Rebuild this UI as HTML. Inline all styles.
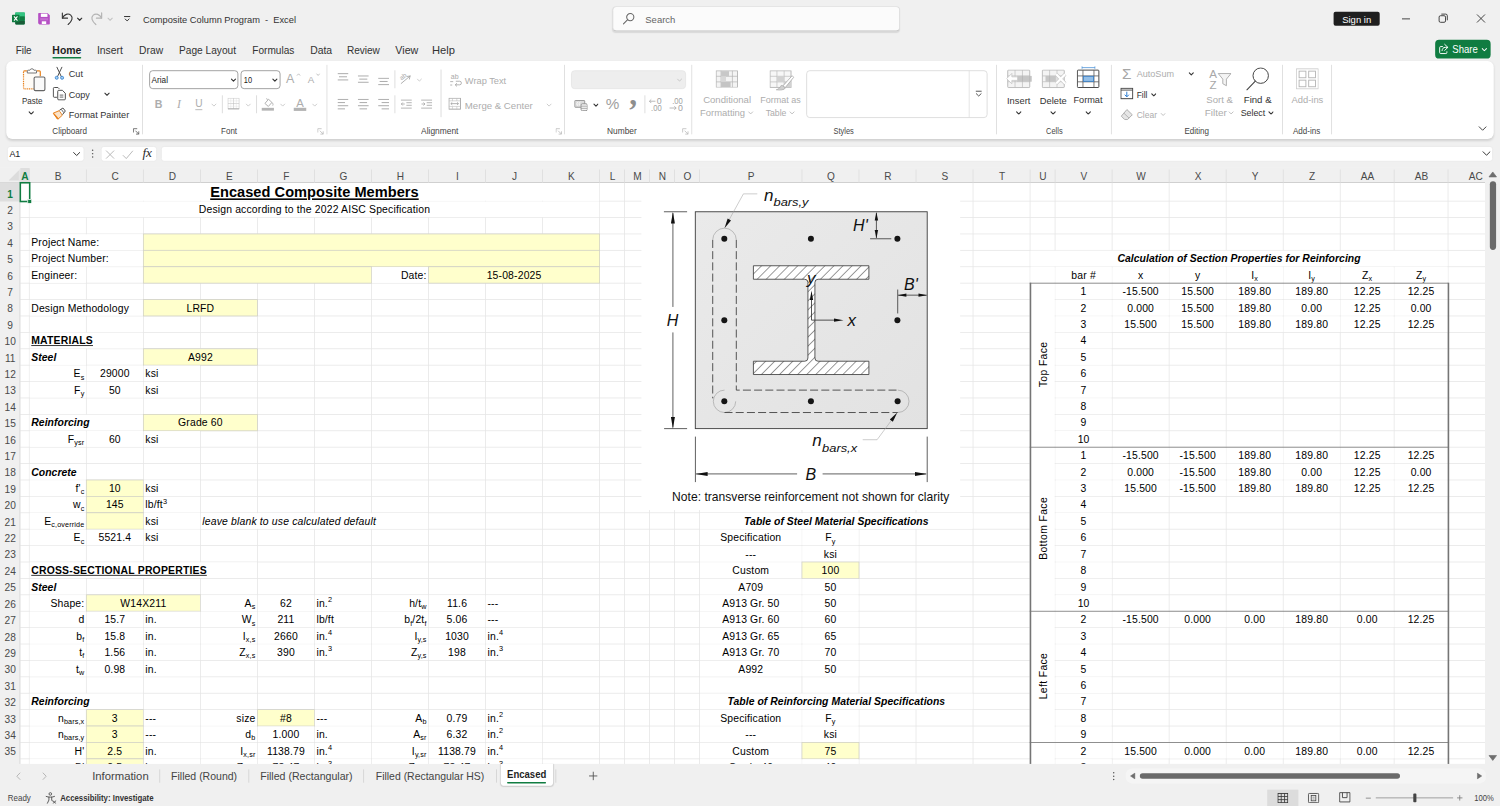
<!DOCTYPE html>
<html lang="en"><head><meta charset="utf-8"><title>Composite Column Program - Excel</title>
<style>
html,body{margin:0;padding:0;background:#f0f0f0;}
body{width:1500px;height:806px;overflow:hidden;position:relative;font-family:"Liberation Sans",sans-serif;}
#app{position:absolute;left:0;top:0;width:1920px;height:1032px;transform:scale(0.78125,0.7811);transform-origin:0 0;background:#f0f0f0;overflow:hidden;color:#242424;font-size:12px;}
#app div,#app span,#app svg{position:absolute;box-sizing:border-box;}
#app span.i{position:static;}
.t{white-space:nowrap;line-height:1;}
.g{color:#a3a3a3;}
.c{text-align:center;}
.r{text-align:right;}
/* sheet */
#sheet{left:0;top:215px;width:1901px;height:763px;overflow:hidden;background:#fff;}
.vl{top:0;width:1px;height:800px;background:#e6e6e6;}
.hl{left:0;height:1px;width:1901px;background:#e6e6e6;}
.ce{white-space:nowrap;font-size:13.33px;line-height:22px;color:#000;background:#fff;overflow:visible;padding:0 2px 0 2px;letter-spacing:0.2px;}
.ce.n{background:transparent;}
.y{background:#ffffcc;box-shadow:0 0 0 1px #d2d2c6;}
.b{font-weight:bold;letter-spacing:0.25px;}
.b.it{letter-spacing:0.05px;}
.it{font-style:italic;}
.u{text-decoration:underline;}
.ce sub{font-size:9.2px;vertical-align:baseline;position:relative;top:3px;line-height:0;}
.ce sup{font-size:9.4px;vertical-align:baseline;position:relative;top:-5.6px;line-height:0;}
.ch{top:2px;height:18px;line-height:18px;font-size:12.9px;color:#4a4a4a;text-align:center;}
.rh{left:0;width:26px;font-size:13px;color:#4a4a4a;text-align:center;line-height:21px;height:21px;}
</style></head><body><div id="app">
<svg style="left:15.36px;top:15.36px;" width="17.28" height="17.28" viewBox="0 0 16 16"><rect x="4.2" y="0.8" width="11.3" height="14.4" rx="1.2" fill="#21a366"/>
<rect x="4.2" y="0.8" width="11.3" height="4.8" fill="#33c481"/><rect x="4.2" y="10.4" width="11.3" height="4.8" rx="1.2" fill="#185c37"/>
<rect x="9.8" y="5.6" width="5.7" height="4.8" fill="#107c41"/>
<rect x="0.3" y="3.6" width="8.9" height="8.9" rx="1" fill="#107c41"/>
<path d="M2.7 5.6 L6.8 10.5 M6.8 5.6 L2.7 10.5" stroke="#fff" stroke-width="1.3"/></svg>
<svg style="left:47.62px;top:16.13px;" width="16.64" height="16.13" viewBox="0 0 16 16"><path d="M0.6 1.6 a1 1 0 0 1 1-1 H12.4 L15.4 3.6 V14.4 a1 1 0 0 1-1 1 H2.2 L0.6 13.8 Z" fill="#b54fc4"/>
<rect x="4" y="1.4" width="8.4" height="4.2" fill="#fff"/>
<rect x="3.2" y="7.2" width="10" height="2.8" fill="#c56ed1"/>
<rect x="5.2" y="11.2" width="5.6" height="3.4" fill="#fff"/></svg>
<svg style="left:76.8px;top:14.08px;" width="17.92" height="19.2" viewBox="0 0 14 15"><path d="M2.2 2 V7.2 H7.4" fill="none" stroke="#333" stroke-width="1.1" stroke-linecap="round" stroke-linejoin="round"/>
<path d="M2.4 7 C4 3.4 8 2 10.6 4.2 C13.2 6.6 12 10 8 13.6" fill="none" stroke="#333" stroke-width="1.1" stroke-linecap="round"/></svg>
<svg style="left:98.43px;top:21.7px;" width="7.94" height="5.25" viewBox="-3.1 -2.05 6.2 4.1"><path d="M-2.1 -1.05 L0 1.05 L2.1 -1.05" fill="none" stroke="#333" stroke-width="1.2" stroke-linecap="round" stroke-linejoin="round"/></svg>
<svg style="left:115.2px;top:14.08px;" width="17.92" height="19.2" viewBox="0 0 14 15"><g transform="translate(14,0) scale(-1,1)"><path d="M2.2 2 V7.2 H7.4" fill="none" stroke="#b4b4b4" stroke-width="1.2" stroke-linecap="round" stroke-linejoin="round"/>
<path d="M2.4 7 C4 3.4 8 2 10.6 4.2 C13.2 6.6 12 10 8 13.6" fill="none" stroke="#b4b4b4" stroke-width="1.2" stroke-linecap="round"/></g></svg>
<svg style="left:136.83px;top:21.7px;" width="7.94" height="5.25" viewBox="-3.1 -2.05 6.2 4.1"><path d="M-2.1 -1.05 L0 1.05 L2.1 -1.05" fill="none" stroke="#c4c4c4" stroke-width="1.1" stroke-linecap="round" stroke-linejoin="round"/></svg>
<svg style="left:156.93px;top:19.2px;" width="11.52" height="11.52" viewBox="0 0 9 9"><path d="M1.8 1.7 H7.2" stroke="#333" stroke-width="1" stroke-linecap="round"/><path d="M2.6 4.2 L4.5 6.1 L6.4 4.2" fill="none" stroke="#333" stroke-width="1" stroke-linecap="round" stroke-linejoin="round"/></svg>
<div class="t " style="transform:scaleX(0.9887);transform-origin:0 0;left:183.04px;top:19.17px;font-size:12px;color:#333;white-space:pre;">Composite Column Program  -  Excel</div>
<div style="left:784.26px;top:8.45px;width:367.49px;height:31.49px;background:#fbfbfb;border:1px solid #dcdcdc;border-bottom-color:#c4c4c4;border-radius:5px;box-shadow:0 1px 1.5px rgba(0,0,0,0.10);"></div>
<svg style="left:796.16px;top:15.36px;" width="17.92" height="17.92" viewBox="0 0 14 14"><circle cx="8.4" cy="5.4" r="3.6" fill="none" stroke="#666" stroke-width="1.05"/><path d="M5.8 8 L1.6 12.2" stroke="#666" stroke-width="1.05" stroke-linecap="round"/></svg>
<div class="t " style="transform:scaleX(0.9934);transform-origin:0 0;left:825.6px;top:18.68px;font-size:12.2px;color:#666;">Search</div>
<div style="left:1707.01px;top:14.72px;width:59.01px;height:18.56px;background:#1f1f1f;border-radius:2.5px;"></div>
<div class="t " style="transform:scaleX(1.0116);transform-origin:0 0;left:1717.89px;top:18.66px;font-size:12px;color:#fff;">Sign in</div>
<svg style="left:1792px;top:16.64px;" width="15.36" height="15.36" viewBox="0 0 12 12"><path d="M2 5.6 H10" stroke="#333" stroke-width="0.9"/></svg>
<svg style="left:1839.36px;top:15.36px;" width="16.64" height="16.64" viewBox="0 0 13 13"><rect x="2.4" y="4" width="6.4" height="6.6" rx="1.4" fill="none" stroke="#333" stroke-width="0.9"/><path d="M4.6 2.4 H9 a1.6 1.6 0 0 1 1.6 1.6 V8.6" fill="none" stroke="#333" stroke-width="0.9"/></svg>
<svg style="left:1888px;top:16px;" width="15.36" height="15.36" viewBox="0 0 12 12"><path d="M2 2 L10 10 M10 2 L2 10" stroke="#333" stroke-width="0.9"/></svg>
<div class="t " style="transform:scaleX(0.9776);transform-origin:0 0;left:20.48px;top:58.05px;font-size:13px;color:#333;">File</div>
<div class="t " style="transform:scaleX(1.0277);transform-origin:0 0;left:66.56px;top:58.05px;font-size:13px;color:#1f1f1f;font-weight:bold;">Home</div>
<div style="left:66.56px;top:72.96px;width:37.89px;height:2.18px;background:#107c41;border-radius:1px;"></div>
<div class="t " style="transform:scaleX(1.0236);transform-origin:0 0;left:124.16px;top:58.05px;font-size:13px;color:#333;">Insert</div>
<div class="t " style="transform:scaleX(1.0126);transform-origin:0 0;left:177.92px;top:58.05px;font-size:13px;color:#333;">Draw</div>
<div class="t " style="left:229.12px;top:58.05px;font-size:13px;color:#333;">Page Layout</div>
<div class="t " style="transform:scaleX(0.9923);transform-origin:0 0;left:322.56px;top:58.05px;font-size:13px;color:#333;">Formulas</div>
<div class="t " style="transform:scaleX(1.0255);transform-origin:0 0;left:396.8px;top:58.05px;font-size:13px;color:#333;">Data</div>
<div class="t " style="transform:scaleX(0.9909);transform-origin:0 0;left:444.16px;top:58.05px;font-size:13px;color:#333;">Review</div>
<div class="t " style="transform:scaleX(1.0535);transform-origin:0 0;left:505.6px;top:58.05px;font-size:13px;color:#333;">View</div>
<div class="t " style="transform:scaleX(1.1011);transform-origin:0 0;left:552.96px;top:58.05px;font-size:13px;color:#333;">Help</div>
<div style="left:1836.8px;top:50.82px;width:71.3px;height:24.32px;background:#107c41;border-radius:5px;"></div>
<svg style="left:1841.15px;top:55.04px;" width="14.08" height="15.36" viewBox="0 0 11 12"><path d="M4.6 3.6 H2.4 a1 1 0 0 0-1 1 V9.6 a1 1 0 0 0 1 1 H7.6 a1 1 0 0 0 1-1 V8.4" fill="none" stroke="#fff" stroke-width="0.95"/><path d="M6.4 1.4 L9.6 4.4 L6.4 7.4 M9.4 4.4 H7 C5 4.4 4 5.6 3.8 7.6" fill="none" stroke="#fff" stroke-width="0.95" stroke-linejoin="round" stroke-linecap="round"/></svg>
<div class="t " style="transform:scaleX(0.9409);transform-origin:0 0;left:1858.56px;top:56.77px;font-size:13px;color:#fff;">Share</div>
<svg style="left:1896.19px;top:61.12px;" width="7.94" height="5.25" viewBox="-3.1 -2.05 6.2 4.1"><path d="M-2.1 -1.05 L0 1.05 L2.1 -1.05" fill="none" stroke="#fff" stroke-width="1.0" stroke-linecap="round" stroke-linejoin="round"/></svg>
<div style="left:7.68px;top:78.08px;width:1904.38px;height:99.97px;background:#fff;border-radius:8px;box-shadow:0 1.5px 3px rgba(0,0,0,0.13);"></div>
<div style="left:182.03px;top:83.2px;width:1px;height:88.32px;background:#d8d8d8;"></div>
<div style="left:417.93px;top:83.2px;width:1px;height:88.32px;background:#d8d8d8;"></div>
<div style="left:722.06px;top:83.2px;width:1px;height:88.32px;background:#d8d8d8;"></div>
<div style="left:884.88px;top:83.2px;width:1px;height:88.32px;background:#d8d8d8;"></div>
<div style="left:1274.51px;top:83.2px;width:1px;height:88.32px;background:#d8d8d8;"></div>
<div style="left:1421.71px;top:83.2px;width:1px;height:88.32px;background:#d8d8d8;"></div>
<div style="left:1640.59px;top:83.2px;width:1px;height:88.32px;background:#d8d8d8;"></div>
<div style="left:1703.82px;top:83.2px;width:1px;height:88.32px;background:#d8d8d8;"></div>
<div class="t " style="transform:scaleX(0.8622);transform-origin:0 0;left:67.07px;top:161.76px;font-size:12px;color:#444;">Clipboard</div>
<svg style="left:170.37px;top:163.84px;" width="8.96" height="8.96" viewBox="0 0 7 7"><path d="M0.6 4.4 V0.6 H4.4" fill="none" stroke="#555" stroke-width="0.8"/><path d="M2.6 2.6 L6 6 M6 3.2 V6 H3.2" fill="none" stroke="#555" stroke-width="0.8"/></svg>
<div class="t " style="transform:scaleX(0.8529);transform-origin:0 0;left:282.75px;top:161.76px;font-size:12px;color:#444;">Font</div>
<svg style="left:405.89px;top:163.84px;" width="8.96" height="8.96" viewBox="0 0 7 7"><path d="M0.6 4.4 V0.6 H4.4" fill="none" stroke="#bbb" stroke-width="0.8"/><path d="M2.6 2.6 L6 6 M6 3.2 V6 H3.2" fill="none" stroke="#bbb" stroke-width="0.8"/></svg>
<div class="t " style="transform:scaleX(0.8947);transform-origin:0 0;left:539.26px;top:161.76px;font-size:12px;color:#444;">Alignment</div>
<svg style="left:710.66px;top:163.84px;" width="8.96" height="8.96" viewBox="0 0 7 7"><path d="M0.6 4.4 V0.6 H4.4" fill="none" stroke="#bbb" stroke-width="0.8"/><path d="M2.6 2.6 L6 6 M6 3.2 V6 H3.2" fill="none" stroke="#bbb" stroke-width="0.8"/></svg>
<div class="t " style="transform:scaleX(0.8907);transform-origin:0 0;left:776.96px;top:161.76px;font-size:12px;color:#444;">Number</div>
<svg style="left:872.7px;top:163.84px;" width="8.96" height="8.96" viewBox="0 0 7 7"><path d="M0.6 4.4 V0.6 H4.4" fill="none" stroke="#bbb" stroke-width="0.8"/><path d="M2.6 2.6 L6 6 M6 3.2 V6 H3.2" fill="none" stroke="#bbb" stroke-width="0.8"/></svg>
<div class="t " style="transform:scaleX(0.7912);transform-origin:0 0;left:1067.14px;top:161.76px;font-size:12px;color:#444;">Styles</div>
<div class="t " style="transform:scaleX(0.7918);transform-origin:0 0;left:1338.5px;top:161.76px;font-size:12px;color:#444;">Cells</div>
<div class="t " style="transform:scaleX(0.8582);transform-origin:0 0;left:1516.29px;top:161.76px;font-size:12px;color:#444;">Editing</div>
<div class="t " style="transform:scaleX(0.8588);transform-origin:0 0;left:1655.42px;top:161.76px;font-size:12px;color:#444;">Add-ins</div>
<svg style="left:1891.58px;top:160.7px;" width="11.52" height="7.04" viewBox="-4.5 -2.75 9 5.5"><path d="M-3.5 -1.75 L0 1.75 L3.5 -1.75" fill="none" stroke="#444" stroke-width="1.0" stroke-linecap="round" stroke-linejoin="round"/></svg>
<svg style="left:25.6px;top:84.48px;" width="34.56" height="34.56" viewBox="0 0 27 27"><path d="M3.8 6 V22.6 H13 V11 H19.4 V6 Z" fill="#fffcf7"/>
<path d="M6.6 5.2 H4.2 a1 1 0 0 0-1 1" fill="none" stroke="#e8821e" stroke-width="1.2"/>
<path d="M3.2 6.4 V22.2 a1 1 0 0 0 1 1 H13.4" fill="none" stroke="#e8821e" stroke-width="1.2" stroke-dasharray="1.1 0.7"/>
<path d="M16.6 5.2 H19 a1 1 0 0 1 1 1 V10.6" fill="none" stroke="#e8821e" stroke-width="1.2"/>
<path d="M7 7.4 V5.4 a0.8 0.8 0 0 1 .8-.8 H9.6 a2.1 2.1 0 0 1 4 0 H15.4 a0.8 0.8 0 0 1 .8.8 V7.4 Z" fill="#fff" stroke="#777" stroke-width="1"/>
<rect x="13.8" y="11.4" width="10.8" height="13.6" rx="1.3" fill="#fafafa" stroke="#666" stroke-width="1.1"/></svg>
<div class="t " style="transform:scaleX(0.8593);transform-origin:0 0;left:27.65px;top:123.23px;font-size:12px;color:#333;">Paste</div>
<svg style="left:36.35px;top:141.5px;" width="7.94" height="5.25" viewBox="-3.1 -2.05 6.2 4.1"><path d="M-2.1 -1.05 L0 1.05 L2.1 -1.05" fill="none" stroke="#333" stroke-width="1.1" stroke-linecap="round" stroke-linejoin="round"/></svg>
<svg style="left:69.12px;top:85.12px;" width="14.08" height="17.92" viewBox="0 0 11 14"><path d="M3 0.8 L7.4 10.2 M8 0.8 L3.6 10.2" stroke="#444" stroke-width="0.95" stroke-linecap="round"/>
<circle cx="2.8" cy="11.4" r="1.5" fill="#a9d1f5" stroke="#3a86d0" stroke-width="0.9"/><circle cx="8.2" cy="11.4" r="1.5" fill="#a9d1f5" stroke="#3a86d0" stroke-width="0.9"/></svg>
<div class="t " style="transform:scaleX(0.9733);transform-origin:0 0;left:88.06px;top:89.06px;font-size:12px;color:#333;">Cut</div>
<svg style="left:67.2px;top:110.72px;" width="17.92" height="17.92" viewBox="0 0 14 14"><path d="M4.6 10.6 H2 a1 1 0 0 1-1-1 V1.8 a1 1 0 0 1 1-1 H5.6 L7 2.2" fill="none" stroke="#444" stroke-width="0.95"/>
<path d="M5.4 4.6 a1 1 0 0 1 1-1 H10 L13 6.6 V12.2 a1 1 0 0 1-1 1 H6.4 a1 1 0 0 1-1-1 Z" fill="#fff" stroke="#444" stroke-width="0.95"/>
<path d="M7.4 8.4 H11 M7.4 10.4 H11" stroke="#444" stroke-width="0.8"/></svg>
<div class="t " style="transform:scaleX(0.9641);transform-origin:0 0;left:88.06px;top:114.91px;font-size:12px;color:#333;">Copy</div>
<svg style="left:132.86px;top:117.7px;" width="7.94" height="5.25" viewBox="-3.1 -2.05 6.2 4.1"><path d="M-2.1 -1.05 L0 1.05 L2.1 -1.05" fill="none" stroke="#333" stroke-width="1.1" stroke-linecap="round" stroke-linejoin="round"/></svg>
<svg style="left:67.2px;top:136.96px;" width="17.92" height="16.64" viewBox="0 0 14 13"><path d="M0.8 6.2 L7 3.6 L10 8.2 L5.6 12.2 Z" fill="#fbe3c8" stroke="#e8821e" stroke-width="1"/>
<path d="M2 6.6 L6.4 11.6 L4.8 12.4 L0.8 6.4Z" fill="#e8821e"/>
<path d="M7.2 3.2 L10.6 1 L13 4 L10.2 7.6" fill="#fff" stroke="#444" stroke-width="0.95" stroke-linejoin="round"/><path d="M9 2.4 L11.4 5.6" stroke="#444" stroke-width="0.8"/></svg>
<div class="t " style="transform:scaleX(0.9758);transform-origin:0 0;left:88.06px;top:141.28px;font-size:12px;color:#333;">Format Painter</div>
<div style="left:190.85px;top:90.11px;width:114.3px;height:23.55px;border:1px solid #8a8a8a;border-radius:4.5px;background:#fff;"></div>
<div class="t " style="transform:scaleX(0.8744);transform-origin:0 0;left:194.05px;top:96.23px;font-size:12px;color:#222;">Arial</div>
<svg style="left:295.17px;top:100.35px;" width="7.68" height="5.12" viewBox="-3 -2 6 4"><path d="M-2 -1 L0 1 L2 -1" fill="none" stroke="#333" stroke-width="1.15" stroke-linecap="round" stroke-linejoin="round"/></svg>
<div style="left:307.71px;top:90.11px;width:51.2px;height:23.55px;border:1px solid #8a8a8a;border-radius:4.5px;background:#fff;"></div>
<div class="t " style="transform:scaleX(0.7959);transform-origin:0 0;left:311.55px;top:96.23px;font-size:12px;color:#222;">10</div>
<svg style="left:348.42px;top:100.35px;" width="7.68" height="5.12" viewBox="-3 -2 6 4"><path d="M-2 -1 L0 1 L2 -1" fill="none" stroke="#333" stroke-width="1.15" stroke-linecap="round" stroke-linejoin="round"/></svg>
<div class="t " style="left:366.08px;top:93.02px;font-size:16px;color:#adadad;">A</div>
<svg style="left:378.88px;top:92.8px;" width="6.4" height="5.12" viewBox="0 0 5 4"><path d="M0.8 3 L2.5 1.2 L4.2 3" fill="none" stroke="#a8a8a8" stroke-width="0.7"/></svg>
<div class="t " style="left:393.86px;top:95.7px;font-size:12.5px;color:#adadad;">A</div>
<svg style="left:403.84px;top:93.44px;" width="6.4" height="5.12" viewBox="0 0 5 4"><path d="M0.8 1 L2.5 2.8 L4.2 1" fill="none" stroke="#a8a8a8" stroke-width="0.7"/></svg>
<div class="t " style="left:198.1px;top:126.58px;font-size:13.6px;color:#adadad;font-weight:bold;">B</div>
<div class="t " style="left:226.65px;top:126.07px;font-size:15px;color:#adadad;font-style:italic;font-family:'Liberation Serif',serif;">I</div>
<div class="t " style="left:249.77px;top:126.14px;font-size:13px;color:#adadad;">U</div>
<div style="left:249.6px;top:139.78px;width:9.47px;height:1.02px;background:#a8a8a8;"></div>
<svg style="left:270.21px;top:131.58px;" width="7.68" height="5.12" viewBox="-3 -2 6 4"><path d="M-2 -1 L0 1 L2 -1" fill="none" stroke="#c8c8c8" stroke-width="0.9" stroke-linecap="round" stroke-linejoin="round"/></svg>
<div style="left:284.04px;top:122.11px;width:1px;height:23.3px;background:#d4d4d4;"></div>
<svg style="left:290.56px;top:125.44px;" width="16" height="15.36" viewBox="0 0 12.5 12"><path d="M0.6 0.6 H11.8 V11.2 H0.6 Z M6.2 0.6 V11.2 M0.6 5.9 H11.8" fill="none" stroke="#bdbdbd" stroke-width="0.55"/><path d="M3.4 0.6 V11.2 M9 0.6 V11.2 M0.6 3.2 H11.8 M0.6 8.6 H11.8" stroke="#dcdcdc" stroke-width="0.4"/><path d="M0.6 11.2 H11.8" stroke="#a8a8a8" stroke-width="0.9"/></svg>
<svg style="left:314.37px;top:131.58px;" width="7.68" height="5.12" viewBox="-3 -2 6 4"><path d="M-2 -1 L0 1 L2 -1" fill="none" stroke="#c8c8c8" stroke-width="0.9" stroke-linecap="round" stroke-linejoin="round"/></svg>
<div style="left:327.95px;top:122.11px;width:1px;height:23.3px;background:#d4d4d4;"></div>
<svg style="left:334.08px;top:124.16px;" width="17.92" height="19.2" viewBox="0 0 14 15"><path d="M4 6.6 L7.6 2.4 L11 5.6 L7.4 9.6 Z" fill="none" stroke="#a8a8a8" stroke-width="0.9" stroke-linejoin="round"/><path d="M6.6 3.2 L5.6 1.4 M10.8 5.8 C12.2 6.2 12.4 7.6 11.8 8.8" fill="none" stroke="#a8a8a8" stroke-width="0.8"/><rect x="0.8" y="11" width="12.2" height="2.8" fill="#b4b4b4"/></svg>
<svg style="left:357.89px;top:131.58px;" width="7.68" height="5.12" viewBox="-3 -2 6 4"><path d="M-2 -1 L0 1 L2 -1" fill="none" stroke="#c8c8c8" stroke-width="0.9" stroke-linecap="round" stroke-linejoin="round"/></svg>
<div class="t " style="left:379.16px;top:124.81px;font-size:14.5px;color:#adadad;">A</div>
<div style="left:376.06px;top:138.24px;width:15.62px;height:3.58px;background:#b4b4b4;"></div>
<svg style="left:399.23px;top:131.58px;" width="7.68" height="5.12" viewBox="-3 -2 6 4"><path d="M-2 -1 L0 1 L2 -1" fill="none" stroke="#c8c8c8" stroke-width="0.9" stroke-linecap="round" stroke-linejoin="round"/></svg>
<svg style="left:431.74px;top:93.25px;" width="14.08" height="10.62" viewBox="0 0 11 8.3"><path d="M0 1 H11" stroke="#a8a8a8" stroke-width="0.95"/><path d="M1.5 4.15 H9.5" stroke="#a8a8a8" stroke-width="0.95"/><path d="M0 7.3 H11" stroke="#a8a8a8" stroke-width="0.95"/></svg>
<svg style="left:457.6px;top:96.32px;" width="14.08" height="10.62" viewBox="0 0 11 8.3"><path d="M0 1 H11" stroke="#a8a8a8" stroke-width="0.95"/><path d="M1.5 4.15 H9.5" stroke="#a8a8a8" stroke-width="0.95"/><path d="M0 7.3 H11" stroke="#a8a8a8" stroke-width="0.95"/></svg>
<svg style="left:483.58px;top:99.39px;" width="14.08" height="10.62" viewBox="0 0 11 8.3"><path d="M0 1 H11" stroke="#a8a8a8" stroke-width="0.95"/><path d="M1.5 4.15 H9.5" stroke="#a8a8a8" stroke-width="0.95"/><path d="M0 7.3 H11" stroke="#a8a8a8" stroke-width="0.95"/></svg>
<div style="left:504.72px;top:89.86px;width:1px;height:23.3px;background:#d4d4d4;"></div>
<svg style="left:510.72px;top:92.16px;" width="17.92" height="17.92" viewBox="0 0 14 14"><path d="M2 11.6 L10.6 4.4 M10.8 4.2 L7.8 4.6 M10.8 4.2 L10.2 7.2" fill="none" stroke="#a8a8a8" stroke-width="0.9" stroke-linecap="round"/><text x="1" y="7" font-size="6.5" fill="#a8a8a8" transform="rotate(-38 4 6)" font-family="Liberation Sans,sans-serif">ab</text></svg>
<svg style="left:533.25px;top:100.1px;" width="7.68" height="5.12" viewBox="-3 -2 6 4"><path d="M-2 -1 L0 1 L2 -1" fill="none" stroke="#c8c8c8" stroke-width="0.9" stroke-linecap="round" stroke-linejoin="round"/></svg>
<div style="left:564.11px;top:89.22px;width:1px;height:60.54px;background:#d4d4d4;"></div>
<svg style="left:574.72px;top:92.8px;" width="17.92" height="19.2" viewBox="0 0 14 15"><text x="1.6" y="6.2" font-size="7" fill="#a8a8a8" font-family="Liberation Sans,sans-serif">ab</text><path d="M1 9 H4 M1 12.4 H3 M6 12.2 H10.4 a1.8 1.8 0 0 0 0-3.6 H6.6 M7.8 10.6 L6 12.2 L7.8 13.8" fill="none" stroke="#a8a8a8" stroke-width="0.85"/></svg>
<div class="t " style="transform:scaleX(0.9867);transform-origin:0 0;left:595.07px;top:97.51px;font-size:12px;color:#adadad;">Wrap Text</div>
<svg style="left:431.74px;top:126.3px;" width="14.08" height="14.66" viewBox="0 0 11 11.45"><path d="M0 1 H11" stroke="#a8a8a8" stroke-width="0.95"/><path d="M0 4.15 H7.5" stroke="#a8a8a8" stroke-width="0.95"/><path d="M0 7.3 H11" stroke="#a8a8a8" stroke-width="0.95"/><path d="M0 10.45 H7.5" stroke="#a8a8a8" stroke-width="0.95"/></svg>
<svg style="left:457.6px;top:126.3px;" width="14.08" height="14.66" viewBox="0 0 11 11.45"><path d="M0 1 H11" stroke="#a8a8a8" stroke-width="0.95"/><path d="M1.75 4.15 H9.25" stroke="#a8a8a8" stroke-width="0.95"/><path d="M0 7.3 H11" stroke="#a8a8a8" stroke-width="0.95"/><path d="M1.75 10.45 H9.25" stroke="#a8a8a8" stroke-width="0.95"/></svg>
<svg style="left:483.58px;top:126.3px;" width="14.08" height="14.66" viewBox="0 0 11 11.45"><path d="M0 1 H11" stroke="#a8a8a8" stroke-width="0.95"/><path d="M3.5 4.15 H11" stroke="#a8a8a8" stroke-width="0.95"/><path d="M0 7.3 H11" stroke="#a8a8a8" stroke-width="0.95"/><path d="M3.5 10.45 H11" stroke="#a8a8a8" stroke-width="0.95"/></svg>
<div style="left:504.72px;top:122.24px;width:1px;height:22.78px;background:#d4d4d4;"></div>
<svg style="left:512.64px;top:126.46px;" width="14.72" height="14.59" viewBox="0 0 11.5 10"><path d="M0 1 H11.5 M5.6 3.6 H11.5 M5.6 6.2 H11.5 M0 9 H11.5 M4 4.9 H0.6 M2 3.4 L0.5 4.9 L2 6.4" fill="none" stroke="#a8a8a8" stroke-width="0.85"/></svg>
<svg style="left:538.5px;top:126.46px;" width="14.72" height="14.59" viewBox="0 0 11.5 10"><path d="M0 1 H11.5 M5.6 3.6 H11.5 M5.6 6.2 H11.5 M0 9 H11.5 M0.4 4.9 H3.8 M2.4 3.4 L3.9 4.9 L2.4 6.4" fill="none" stroke="#a8a8a8" stroke-width="0.85"/></svg>
<svg style="left:574.08px;top:125.44px;" width="16" height="15.36" viewBox="0 0 12.5 12"><rect x="0.5" y="0.5" width="11.5" height="11" fill="none" stroke="#a0a0a0" stroke-width="0.9"/><path d="M0.5 3.2 H12 M0.5 8.8 H12 M4 0.5 V3.2 M8.4 0.5 V3.2 M4 8.8 V11.5 M8.4 8.8 V11.5" stroke="#bdbdbd" stroke-width="0.6"/><path d="M2.4 6 H10 M3.8 4.8 L2.4 6 L3.8 7.2 M8.6 4.8 L10 6 L8.6 7.2" fill="none" stroke="#a0a0a0" stroke-width="0.8"/></svg>
<div class="t " style="transform:scaleX(1.0260);transform-origin:0 0;left:595.07px;top:128.61px;font-size:12px;color:#adadad;">Merge &amp; Center</div>
<svg style="left:699.26px;top:131.58px;" width="7.68" height="5.12" viewBox="-3 -2 6 4"><path d="M-2 -1 L0 1 L2 -1" fill="none" stroke="#c8c8c8" stroke-width="0.9" stroke-linecap="round" stroke-linejoin="round"/></svg>
<div style="left:731.26px;top:89.86px;width:146.3px;height:23.68px;background:#eeeeee;border:1px solid #e4e4e4;border-radius:4.5px;"></div>
<svg style="left:866.3px;top:100.1px;" width="7.68" height="5.12" viewBox="-3 -2 6 4"><path d="M-2 -1 L0 1 L2 -1" fill="none" stroke="#c4c4c4" stroke-width="0.9" stroke-linecap="round" stroke-linejoin="round"/></svg>
<svg style="left:734.72px;top:128px;" width="17.66" height="14.34" viewBox="0 0 13.8 11.2"><rect x="0.5" y="0.5" width="10" height="6.8" rx="0.6" fill="#dcdcdc" stroke="#909090" stroke-width="0.9"/><path d="M4 2 a2 2 0 0 0 0 3.8 M6.2 2 a2 2 0 0 0 0 3.8" fill="none" stroke="#fff" stroke-width="0.8"/><rect x="6.8" y="3.8" width="6.4" height="6.9" rx="1.4" fill="#f4f4f4" stroke="#909090" stroke-width="0.9"/><path d="M6.8 6.2 H13.2 M6.8 8.4 H13.2" stroke="#909090" stroke-width="0.7"/></svg>
<svg style="left:758.66px;top:131.58px;" width="7.68" height="5.12" viewBox="-3 -2 6 4"><path d="M-2 -1 L0 1 L2 -1" fill="none" stroke="#333" stroke-width="1.1" stroke-linecap="round" stroke-linejoin="round"/></svg>
<div class="t " style="left:775.46px;top:123.1px;font-size:19.5px;color:#a0a0a0;">%</div>
<div class="t " style="left:805.45px;top:100.64px;font-size:40px;color:#8e8e8e;font-weight:bold;font-family:'Liberation Serif',serif;">,</div>
<div style="left:824.84px;top:122.24px;width:1px;height:22.78px;background:#d4d4d4;"></div>
<svg style="left:830.21px;top:124.67px;" width="18.56" height="17.92" viewBox="0 0 14.5 14"><path d="M1 3.6 H7 M2.8 1.8 L1 3.6 L2.8 5.4" fill="none" stroke="#a8a8a8" stroke-width="0.8"/><text x="8.4" y="6.8" font-size="8.8" fill="#a2a2a2" font-family="Liberation Sans,sans-serif">0</text><text x="2.6" y="13.8" font-size="8.8" fill="#a2a2a2" font-family="Liberation Sans,sans-serif" textLength="10.6" lengthAdjust="spacingAndGlyphs">.00</text></svg>
<svg style="left:856.32px;top:124.67px;" width="18.56" height="17.92" viewBox="0 0 14.5 14"><text x="3.4" y="6.8" font-size="8.8" fill="#a2a2a2" font-family="Liberation Sans,sans-serif" textLength="10.6" lengthAdjust="spacingAndGlyphs">.00</text><path d="M0.8 10.4 H7.4 M5.6 8.6 L7.4 10.4 L5.6 12.2" fill="none" stroke="#a8a8a8" stroke-width="0.8"/><text x="9.2" y="13.8" font-size="8.8" fill="#a2a2a2" font-family="Liberation Sans,sans-serif">0</text></svg>
<svg style="left:916.48px;top:89.6px;" width="28.67" height="22.53" viewBox="0 0 22.4 17.6"><rect x="0.5" y="0.5" width="21.4" height="16.6" fill="#f4f4f4" stroke="#b4b4b4" stroke-width="0.9"/><path d="M0.5 6 H21.9 M0.5 11.6 H21.9 M5.4 0.5 V17.1 M16.8 0.5 V17.1" stroke="#b4b4b4" stroke-width="0.7"/><rect x="5.4" y="0.8" width="8" height="5.2" fill="#c8c8c8"/><rect x="5.4" y="6" width="5" height="5.6" fill="#d8d8d8"/><rect x="5.4" y="11.6" width="9.6" height="5.2" fill="#c4c4c4"/></svg>
<div class="t " style="transform:scaleX(1.0211);transform-origin:0 0;left:900.35px;top:122.21px;font-size:12px;color:#adadad;">Conditional</div>
<div class="t " style="transform:scaleX(1.0065);transform-origin:0 0;left:896.13px;top:137.95px;font-size:12px;color:#adadad;">Formatting</div>
<svg style="left:957.18px;top:141.82px;" width="7.68" height="5.12" viewBox="-3 -2 6 4"><path d="M-2 -1 L0 1 L2 -1" fill="none" stroke="#b8b8b8" stroke-width="0.9" stroke-linecap="round" stroke-linejoin="round"/></svg>
<svg style="left:984.96px;top:89.6px;" width="32" height="26.88" viewBox="0 0 25 21"><rect x="0.5" y="0.5" width="21" height="16.6" fill="#f7f7f7" stroke="#b4b4b4" stroke-width="0.9"/><path d="M0.5 6 H21.5 M0.5 11.6 H21.5 M7.4 0.5 V17.1 M14.6 0.5 V17.1" stroke="#bcbcbc" stroke-width="0.7"/><rect x="7.4" y="6" width="7.2" height="5.6" fill="#d2d2d2"/><rect x="14.6" y="11.6" width="6.9" height="5.5" fill="#d2d2d2"/><path d="M22.6 5.4 L24.2 7 L15.6 17.4 L13.4 15.6 Z" fill="#fff" stroke="#a8a8a8" stroke-width="0.8" stroke-linejoin="round"/><path d="M13.2 15.4 L15.8 17.6 C14.6 19.8 10.6 20.6 6.6 19.6 C9.4 18.8 10.8 17 11.6 15.2 Z" fill="#d0d0d0" stroke="#a8a8a8" stroke-width="0.7" stroke-linejoin="round"/></svg>
<div class="t " style="transform:scaleX(0.9621);transform-origin:0 0;left:973.31px;top:122.21px;font-size:12px;color:#adadad;">Format as</div>
<div class="t " style="transform:scaleX(0.9280);transform-origin:0 0;left:980.48px;top:137.95px;font-size:12px;color:#adadad;">Table</div>
<svg style="left:1010.05px;top:141.82px;" width="7.68" height="5.12" viewBox="-3 -2 6 4"><path d="M-2 -1 L0 1 L2 -1" fill="none" stroke="#b8b8b8" stroke-width="0.9" stroke-linecap="round" stroke-linejoin="round"/></svg>
<div style="left:1031.68px;top:89.86px;width:232.58px;height:61.57px;background:#fff;border:1px solid #d6d6d6;border-radius:4.5px;"></div>
<div style="left:1240.46px;top:90.37px;width:1px;height:60.67px;background:#dedede;"></div>
<svg style="left:1246.72px;top:114.56px;" width="11.52" height="10.24" viewBox="0 0 9 8"><path d="M1.6 1.4 H7.4" stroke="#444" stroke-width="0.9"/><path d="M1.8 3.6 L4.5 6.2 L7.2 3.6" fill="none" stroke="#444" stroke-width="0.9" stroke-linejoin="round"/></svg>
<svg style="left:1288.32px;top:88.96px;" width="33.28" height="24.32" viewBox="0 0 26 19"><rect x="1.5" y="0.5" width="22" height="17.6" rx="0.8" fill="#f4f4f4" stroke="#b4b4b4" stroke-width="0.9"/><path d="M1.5 6.4 H23.5 M1.5 12.2 H23.5 M8.8 0.5 V18.1 M16.2 0.5 V18.1" stroke="#bcbcbc" stroke-width="0.7"/><rect x="10.7" y="6.4" width="14.8" height="5.8" fill="#c6c6c6"/><path d="M16.2 6.4 V12.2 M23.5 6.4 V12.2" stroke="#b0b0b0" stroke-width="0.6"/><path d="M0.4 9.1 L5.6 3.9 V7.3 H11.4 V10.9 H5.6 V14.3 Z" fill="#fff" stroke="#c6c6c6" stroke-width="0.8" stroke-linejoin="round"/></svg>
<div class="t " style="transform:scaleX(0.9937);transform-origin:0 0;left:1289.22px;top:123.23px;font-size:12px;color:#333;">Insert</div>
<svg style="left:1299.84px;top:141.76px;" width="7.94" height="5.25" viewBox="-3.1 -2.05 6.2 4.1"><path d="M-2.1 -1.05 L0 1.05 L2.1 -1.05" fill="none" stroke="#333" stroke-width="1.1" stroke-linecap="round" stroke-linejoin="round"/></svg>
<svg style="left:1333.12px;top:88.96px;" width="33.28" height="24.32" viewBox="0 0 26 19"><rect x="0.9" y="0.5" width="22" height="17.6" rx="0.8" fill="#f4f4f4" stroke="#b4b4b4" stroke-width="0.9"/><path d="M0.9 6.4 H22.9 M0.9 12.2 H22.9 M8.2 0.5 V18.1 M15.6 0.5 V18.1" stroke="#bcbcbc" stroke-width="0.7"/><rect x="4.1" y="6.4" width="10.4" height="5.8" fill="#c6c6c6"/><path d="M8.2 6.4 V12.2" stroke="#b0b0b0" stroke-width="0.6"/><path d="M14.8 4.7 L23.8 13.9 M23.8 4.7 L14.8 13.9" stroke="#cacaca" stroke-width="3.6"/><path d="M14.8 4.7 L23.8 13.9 M23.8 4.7 L14.8 13.9" stroke="#fff" stroke-width="2.2"/></svg>
<div class="t " style="transform:scaleX(0.9926);transform-origin:0 0;left:1331.07px;top:123.23px;font-size:12px;color:#333;">Delete</div>
<svg style="left:1344.26px;top:141.76px;" width="7.94" height="5.25" viewBox="-3.1 -2.05 6.2 4.1"><path d="M-2.1 -1.05 L0 1.05 L2.1 -1.05" fill="none" stroke="#333" stroke-width="1.1" stroke-linecap="round" stroke-linejoin="round"/></svg>
<svg style="left:1377.92px;top:83.97px;" width="30.08" height="29.44" viewBox="0 0 23.5 23"><path d="M5.5 2 H18.3 M5.5 0.8 V3.2 M18.3 0.8 V3.2" stroke="#4f94d8" stroke-width="0.8"/><rect x="0.8" y="4.5" width="21.5" height="17.4" rx="0.8" fill="#fff" stroke="#4a4a4a" stroke-width="1"/><path d="M0.8 10.3 H22.3 M0.8 16.2 H22.3 M6.4 4.5 V21.9 M17.4 4.5 V21.9" stroke="#5a5a5a" stroke-width="0.8"/><rect x="6.8" y="10.7" width="10.2" height="5.1" fill="#93bfe8" stroke="#3b7fc4" stroke-width="0.9"/></svg>
<div class="t " style="transform:scaleX(0.9801);transform-origin:0 0;left:1374.21px;top:121.95px;font-size:12px;color:#333;">Format</div>
<svg style="left:1388.67px;top:141.5px;" width="7.94" height="5.25" viewBox="-3.1 -2.05 6.2 4.1"><path d="M-2.1 -1.05 L0 1.05 L2.1 -1.05" fill="none" stroke="#333" stroke-width="1.1" stroke-linecap="round" stroke-linejoin="round"/></svg>
<div class="t " style="left:1436.02px;top:85.47px;font-size:19.5px;color:#a6a6a6;">Σ</div>
<div class="t " style="transform:scaleX(0.9672);transform-origin:0 0;left:1455.23px;top:89.06px;font-size:12px;color:#adadad;">AutoSum</div>
<svg style="left:1521.15px;top:92.42px;" width="7.68" height="5.12" viewBox="-3 -2 6 4"><path d="M-2 -1 L0 1 L2 -1" fill="none" stroke="#333" stroke-width="1.1" stroke-linecap="round" stroke-linejoin="round"/></svg>
<svg style="left:1433.98px;top:112.38px;" width="16.64" height="15.36" viewBox="0 0 13 12"><rect x="0.6" y="0.8" width="11.8" height="10.4" fill="#fff" stroke="#444" stroke-width="1"/><path d="M0.6 2.6 H12.4" stroke="#444" stroke-width="0.9"/><path d="M6.5 4.2 V9.2 M4.4 7.2 L6.5 9.4 L8.6 7.2" fill="none" stroke="#2b7cd3" stroke-width="1"/></svg>
<div class="t " style="transform:scaleX(0.8935);transform-origin:0 0;left:1455.23px;top:114.79px;font-size:12px;color:#333;">Fill</div>
<svg style="left:1472.51px;top:118.53px;" width="7.68" height="5.12" viewBox="-3 -2 6 4"><path d="M-2 -1 L0 1 L2 -1" fill="none" stroke="#333" stroke-width="1.1" stroke-linecap="round" stroke-linejoin="round"/></svg>
<svg style="left:1434.24px;top:138.88px;" width="16.64" height="15.36" viewBox="0 0 13 12"><path d="M6.6 1 L12 6.2 L7.2 11 H4.4 L1 7.6 Z" fill="#e6e6e6" stroke="#a8a8a8" stroke-width="0.9" stroke-linejoin="round"/><path d="M3.6 4.6 L8.8 9.6" stroke="#a8a8a8" stroke-width="0.8"/></svg>
<div class="t " style="transform:scaleX(0.9061);transform-origin:0 0;left:1455.23px;top:140.64px;font-size:12px;color:#adadad;">Clear</div>
<svg style="left:1484.8px;top:144.38px;" width="7.68" height="5.12" viewBox="-3 -2 6 4"><path d="M-2 -1 L0 1 L2 -1" fill="none" stroke="#b8b8b8" stroke-width="0.9" stroke-linecap="round" stroke-linejoin="round"/></svg>
<svg style="left:1545.6px;top:87.68px;" width="30.72" height="26.88" viewBox="0 0 24 21"><text x="1.4" y="9.4" font-size="11.6" fill="#a8a8a8" font-family="Liberation Sans,sans-serif">A</text><text x="1.8" y="20.4" font-size="11.6" fill="#a8a8a8" font-family="Liberation Sans,sans-serif">Z</text><path d="M10.4 4.8 H23.2 L18.6 10.4 V17 L15 15 V10.4 Z" fill="#f4f4f4" stroke="#a8a8a8" stroke-width="0.9" stroke-linejoin="round"/></svg>
<div class="t " style="transform:scaleX(1.0210);transform-origin:0 0;left:1544.45px;top:122.21px;font-size:12px;color:#adadad;">Sort &amp;</div>
<div class="t " style="transform:scaleX(1.0608);transform-origin:0 0;left:1542.14px;top:137.95px;font-size:12px;color:#adadad;">Filter</div>
<svg style="left:1572.1px;top:141.82px;" width="7.68" height="5.12" viewBox="-3 -2 6 4"><path d="M-2 -1 L0 1 L2 -1" fill="none" stroke="#b8b8b8" stroke-width="0.9" stroke-linecap="round" stroke-linejoin="round"/></svg>
<svg style="left:1593.6px;top:86.4px;" width="32" height="30.72" viewBox="0 0 25 24"><circle cx="15.4" cy="8.5" r="7.7" fill="none" stroke="#444" stroke-width="1"/><path d="M10 14 L1.6 22.6" stroke="#444" stroke-width="1.1" stroke-linecap="round"/></svg>
<div class="t " style="transform:scaleX(1.0260);transform-origin:0 0;left:1591.55px;top:122.21px;font-size:12px;color:#333;">Find &amp;</div>
<div class="t " style="transform:scaleX(0.9441);transform-origin:0 0;left:1588.22px;top:137.95px;font-size:12px;color:#333;">Select</div>
<svg style="left:1622.53px;top:141.76px;" width="7.94" height="5.25" viewBox="-3.1 -2.05 6.2 4.1"><path d="M-2.1 -1.05 L0 1.05 L2.1 -1.05" fill="none" stroke="#333" stroke-width="1.1" stroke-linecap="round" stroke-linejoin="round"/></svg>
<svg style="left:1659.39px;top:87.04px;" width="28.93" height="27.9" viewBox="0 0 22.6 21"><rect x="0.5" y="0.5" width="21.6" height="20" fill="#fff" stroke="#c8c8c8" stroke-width="0.8"/><rect x="3" y="2.8" width="6.8" height="6.6" fill="none" stroke="#b4b4b4" stroke-width="0.9"/><rect x="12.6" y="2.8" width="6.8" height="6.6" fill="none" stroke="#b4b4b4" stroke-width="0.9"/><rect x="3" y="11.8" width="6.8" height="6.6" fill="none" stroke="#b4b4b4" stroke-width="0.9"/><rect x="12.6" y="11.8" width="6.8" height="6.6" fill="none" stroke="#b4b4b4" stroke-width="0.9"/></svg>
<div class="t " style="left:1653.12px;top:122.47px;font-size:12px;color:#adadad;">Add-ins</div>
<div style="left:8.96px;top:186.88px;width:98.56px;height:20.48px;background:#fff;border-radius:4px;border:1px solid #e8e8e8;"></div>
<div class="t " style="transform:scaleX(0.9283);transform-origin:0 0;left:12.03px;top:191.24px;font-size:12.4px;color:#222;">A1</div>
<svg style="left:92.93px;top:194.43px;" width="10.24" height="6.4" viewBox="-4 -2.5 8 5"><path d="M-3 -1.5 L0 1.5 L3 -1.5" fill="none" stroke="#333" stroke-width="1.0" stroke-linecap="round" stroke-linejoin="round"/></svg>
<svg style="left:115.84px;top:189.44px;" width="5.12" height="15.36" viewBox="0 0 4 12"><circle cx="2" cy="2.6" r="0.75" fill="#555"/><circle cx="2" cy="6" r="0.75" fill="#555"/><circle cx="2" cy="9.4" r="0.75" fill="#555"/></svg>
<div style="left:129.28px;top:186.88px;width:72.19px;height:20.48px;background:#fff;border-radius:4px;border:1px solid #e8e8e8;"></div>
<svg style="left:134.4px;top:190.72px;" width="14.08" height="14.08" viewBox="0 0 11 11"><path d="M1.4 1.4 L9.4 9.4 M9.4 1.4 L1.4 9.4" stroke="#b2b2b2" stroke-width="0.9"/></svg>
<svg style="left:156.16px;top:190.72px;" width="15.36" height="14.08" viewBox="0 0 12 11"><path d="M1 6 L4.4 9.4 L11 1.6" fill="none" stroke="#b2b2b2" stroke-width="0.9"/></svg>
<div class="t " style="left:182.32px;top:187.45px;font-size:17px;color:#2a2a2a;font-family:'Liberation Serif',serif;font-style:italic;">fx</div>
<div style="left:206.08px;top:186.88px;width:1704.96px;height:20.48px;background:#fff;border-radius:4px;border:1px solid #e8e8e8;"></div>
<svg style="left:1896.7px;top:193.09px;" width="11.52" height="7.04" viewBox="-4.5 -2.75 9 5.5"><path d="M-3.5 -1.75 L0 1.75 L3.5 -1.75" fill="none" stroke="#333" stroke-width="1.0" stroke-linecap="round" stroke-linejoin="round"/></svg>
<div id="sheet">
<div class="vl" style="left:37px;top:19px"></div>
<div class="vl" style="left:110px;top:19px"></div>
<div class="vl" style="left:183px;top:19px"></div>
<div class="vl" style="left:256px;top:19px"></div>
<div class="vl" style="left:329px;top:19px"></div>
<div class="vl" style="left:402px;top:19px"></div>
<div class="vl" style="left:475px;top:19px"></div>
<div class="vl" style="left:548px;top:19px"></div>
<div class="vl" style="left:621px;top:19px"></div>
<div class="vl" style="left:694px;top:19px"></div>
<div class="vl" style="left:767px;top:19px"></div>
<div class="vl" style="left:799px;top:19px"></div>
<div class="vl" style="left:831px;top:19px"></div>
<div class="vl" style="left:863px;top:19px"></div>
<div class="vl" style="left:895px;top:19px"></div>
<div class="vl" style="left:1026px;top:19px"></div>
<div class="vl" style="left:1099px;top:19px"></div>
<div class="vl" style="left:1172px;top:19px"></div>
<div class="vl" style="left:1245px;top:19px"></div>
<div class="vl" style="left:1318px;top:19px"></div>
<div class="vl" style="left:1350px;top:19px"></div>
<div class="vl" style="left:1423px;top:19px"></div>
<div class="vl" style="left:1496px;top:19px"></div>
<div class="vl" style="left:1569px;top:19px"></div>
<div class="vl" style="left:1642px;top:19px"></div>
<div class="vl" style="left:1715px;top:19px"></div>
<div class="vl" style="left:1784px;top:19px"></div>
<div class="vl" style="left:1853px;top:19px"></div>
<div class="hl" style="top:42px"></div>
<div class="hl" style="top:63px"></div>
<div class="hl" style="top:84px"></div>
<div class="hl" style="top:105px"></div>
<div class="hl" style="top:126px"></div>
<div class="hl" style="top:147px"></div>
<div class="hl" style="top:168px"></div>
<div class="hl" style="top:189px"></div>
<div class="hl" style="top:210px"></div>
<div class="hl" style="top:231px"></div>
<div class="hl" style="top:252px"></div>
<div class="hl" style="top:273px"></div>
<div class="hl" style="top:294px"></div>
<div class="hl" style="top:315px"></div>
<div class="hl" style="top:336px"></div>
<div class="hl" style="top:357px"></div>
<div class="hl" style="top:378px"></div>
<div class="hl" style="top:399px"></div>
<div class="hl" style="top:420px"></div>
<div class="hl" style="top:441px"></div>
<div class="hl" style="top:462px"></div>
<div class="hl" style="top:483px"></div>
<div class="hl" style="top:504px"></div>
<div class="hl" style="top:525px"></div>
<div class="hl" style="top:546px"></div>
<div class="hl" style="top:567px"></div>
<div class="hl" style="top:588px"></div>
<div class="hl" style="top:609px"></div>
<div class="hl" style="top:630px"></div>
<div class="hl" style="top:651px"></div>
<div class="hl" style="top:672px"></div>
<div class="hl" style="top:693px"></div>
<div class="hl" style="top:714px"></div>
<div class="hl" style="top:735px"></div>
<div class="hl" style="top:756px"></div>
<div class="hl" style="top:777px"></div>
<div class="ce c b u" style="left:38px;top:19px;width:729px;height:23px;line-height:23px;font-size:18.67px;letter-spacing:0.06px;text-decoration-thickness:1.7px;text-underline-offset:1.6px;">Encased Composite Members</div>
<div class="ce c" style="left:38px;top:43px;width:729px;height:20px;">Design according to the 2022 AISC Specification</div>
<div class="ce" style="left:38px;top:85px;width:145px;height:20px;">Project Name:</div>
<div class="ce y" style="left:184px;top:85px;width:583px;height:20px;"></div>
<div class="ce" style="left:38px;top:106px;width:145px;height:20px;">Project Number:</div>
<div class="ce y" style="left:184px;top:106px;width:583px;height:20px;"></div>
<div class="ce" style="left:38px;top:127px;width:72px;height:20px;">Engineer:</div>
<div class="ce y" style="left:184px;top:127px;width:291px;height:20px;"></div>
<div class="ce r" style="left:476px;top:127px;width:72px;height:20px;">Date:</div>
<div class="ce c y" style="left:549px;top:127px;width:218px;height:20px;">15-08-2025</div>
<div class="ce" style="left:38px;top:169px;width:145px;height:20px;">Design Methodology</div>
<div class="ce c y" style="left:184px;top:169px;width:145px;height:20px;">LRFD</div>
<div class="ce b u" style="left:38px;top:211px;width:145px;height:20px;">MATERIALS</div>
<div class="ce b it" style="left:38px;top:232px;width:72px;height:20px;">Steel</div>
<div class="ce c y" style="left:184px;top:232px;width:145px;height:20px;">A992</div>
<div class="ce r" style="left:38px;top:253px;width:72px;height:20px;">E<sub>s</sub></div>
<div class="ce c" style="left:111px;top:253px;width:72px;height:20px;">29000</div>
<div class="ce" style="left:184px;top:253px;width:72px;height:20px;">ksi</div>
<div class="ce r" style="left:38px;top:274px;width:72px;height:20px;">F<sub>y</sub></div>
<div class="ce c" style="left:111px;top:274px;width:72px;height:20px;">50</div>
<div class="ce" style="left:184px;top:274px;width:72px;height:20px;">ksi</div>
<div class="ce b it" style="left:38px;top:316px;width:145px;height:20px;">Reinforcing</div>
<div class="ce c y" style="left:184px;top:316px;width:145px;height:20px;">Grade 60</div>
<div class="ce r" style="left:38px;top:337px;width:72px;height:20px;">F<sub>ysr</sub></div>
<div class="ce c" style="left:111px;top:337px;width:72px;height:20px;">60</div>
<div class="ce" style="left:184px;top:337px;width:72px;height:20px;">ksi</div>
<div class="ce b it" style="left:38px;top:379px;width:72px;height:20px;">Concrete</div>
<div class="ce r" style="left:38px;top:400px;width:72px;height:20px;">f'<sub>c</sub></div>
<div class="ce c y" style="left:111px;top:400px;width:72px;height:20px;">10</div>
<div class="ce" style="left:184px;top:400px;width:72px;height:20px;">ksi</div>
<div class="ce r" style="left:38px;top:421px;width:72px;height:20px;">w<sub>c</sub></div>
<div class="ce c y" style="left:111px;top:421px;width:72px;height:20px;">145</div>
<div class="ce" style="left:184px;top:421px;width:72px;height:20px;">lb/ft<sup>3</sup></div>
<div class="ce r" style="left:38px;top:442px;width:72px;height:20px;">E<sub>c,override</sub></div>
<div class="ce c y" style="left:111px;top:442px;width:72px;height:20px;"></div>
<div class="ce" style="left:184px;top:442px;width:72px;height:20px;">ksi</div>
<div class="ce it" style="left:257px;top:442px;width:291px;height:20px;">leave blank to use calculated default</div>
<div class="ce r" style="left:38px;top:463px;width:72px;height:20px;">E<sub>c</sub></div>
<div class="ce c" style="left:111px;top:463px;width:72px;height:20px;">5521.4</div>
<div class="ce" style="left:184px;top:463px;width:72px;height:20px;">ksi</div>
<div class="ce b u" style="left:38px;top:505px;width:291px;height:20px;">CROSS-SECTIONAL PROPERTIES</div>
<div class="ce b it" style="left:38px;top:526px;width:72px;height:20px;">Steel</div>
<div class="ce r" style="left:38px;top:547px;width:72px;height:20px;">Shape:</div>
<div class="ce c y" style="left:111px;top:547px;width:145px;height:20px;">W14X211</div>
<div class="ce r" style="left:257px;top:547px;width:72px;height:20px;">A<sub>s</sub></div>
<div class="ce c" style="left:330px;top:547px;width:72px;height:20px;">62</div>
<div class="ce" style="left:403px;top:547px;width:72px;height:20px;">in.<sup>2</sup></div>
<div class="ce r" style="left:476px;top:547px;width:72px;height:20px;">h/t<sub>w</sub></div>
<div class="ce c" style="left:549px;top:547px;width:72px;height:20px;">11.6</div>
<div class="ce" style="left:622px;top:547px;width:72px;height:20px;">---</div>
<div class="ce r" style="left:38px;top:568px;width:72px;height:20px;">d</div>
<div class="ce c" style="left:111px;top:568px;width:72px;height:20px;">15.7</div>
<div class="ce" style="left:184px;top:568px;width:72px;height:20px;">in.</div>
<div class="ce r" style="left:257px;top:568px;width:72px;height:20px;">W<sub>s</sub></div>
<div class="ce c" style="left:330px;top:568px;width:72px;height:20px;">211</div>
<div class="ce" style="left:403px;top:568px;width:72px;height:20px;">lb/ft</div>
<div class="ce r" style="left:476px;top:568px;width:72px;height:20px;">b<sub>f</sub>/2t<sub>f</sub></div>
<div class="ce c" style="left:549px;top:568px;width:72px;height:20px;">5.06</div>
<div class="ce" style="left:622px;top:568px;width:72px;height:20px;">---</div>
<div class="ce r" style="left:38px;top:589px;width:72px;height:20px;">b<sub>f</sub></div>
<div class="ce c" style="left:111px;top:589px;width:72px;height:20px;">15.8</div>
<div class="ce" style="left:184px;top:589px;width:72px;height:20px;">in.</div>
<div class="ce r" style="left:257px;top:589px;width:72px;height:20px;">I<sub>x,s</sub></div>
<div class="ce c" style="left:330px;top:589px;width:72px;height:20px;">2660</div>
<div class="ce" style="left:403px;top:589px;width:72px;height:20px;">in.<sup>4</sup></div>
<div class="ce r" style="left:476px;top:589px;width:72px;height:20px;">I<sub>y,s</sub></div>
<div class="ce c" style="left:549px;top:589px;width:72px;height:20px;">1030</div>
<div class="ce" style="left:622px;top:589px;width:72px;height:20px;">in.<sup>4</sup></div>
<div class="ce r" style="left:38px;top:610px;width:72px;height:20px;">t<sub>f</sub></div>
<div class="ce c" style="left:111px;top:610px;width:72px;height:20px;">1.56</div>
<div class="ce" style="left:184px;top:610px;width:72px;height:20px;">in.</div>
<div class="ce r" style="left:257px;top:610px;width:72px;height:20px;">Z<sub>x,s</sub></div>
<div class="ce c" style="left:330px;top:610px;width:72px;height:20px;">390</div>
<div class="ce" style="left:403px;top:610px;width:72px;height:20px;">in.<sup>3</sup></div>
<div class="ce r" style="left:476px;top:610px;width:72px;height:20px;">Z<sub>y,s</sub></div>
<div class="ce c" style="left:549px;top:610px;width:72px;height:20px;">198</div>
<div class="ce" style="left:622px;top:610px;width:72px;height:20px;">in.<sup>3</sup></div>
<div class="ce r" style="left:38px;top:631px;width:72px;height:20px;">t<sub>w</sub></div>
<div class="ce c" style="left:111px;top:631px;width:72px;height:20px;">0.98</div>
<div class="ce" style="left:184px;top:631px;width:72px;height:20px;">in.</div>
<div class="ce b it" style="left:38px;top:673px;width:145px;height:20px;">Reinforcing</div>
<div class="ce r" style="left:38px;top:694px;width:72px;height:20px;">n<sub>bars,x</sub></div>
<div class="ce c y" style="left:111px;top:694px;width:72px;height:20px;">3</div>
<div class="ce" style="left:184px;top:694px;width:72px;height:20px;">---</div>
<div class="ce r" style="left:257px;top:694px;width:72px;height:20px;">size</div>
<div class="ce c y" style="left:330px;top:694px;width:72px;height:20px;">#8</div>
<div class="ce" style="left:403px;top:694px;width:72px;height:20px;">---</div>
<div class="ce r" style="left:476px;top:694px;width:72px;height:20px;">A<sub>b</sub></div>
<div class="ce c" style="left:549px;top:694px;width:72px;height:20px;">0.79</div>
<div class="ce" style="left:622px;top:694px;width:72px;height:20px;">in.<sup>2</sup></div>
<div class="ce r" style="left:38px;top:715px;width:72px;height:20px;">n<sub>bars,y</sub></div>
<div class="ce c y" style="left:111px;top:715px;width:72px;height:20px;">3</div>
<div class="ce" style="left:184px;top:715px;width:72px;height:20px;">---</div>
<div class="ce r" style="left:257px;top:715px;width:72px;height:20px;">d<sub>b</sub></div>
<div class="ce c" style="left:330px;top:715px;width:72px;height:20px;">1.000</div>
<div class="ce" style="left:403px;top:715px;width:72px;height:20px;">in.</div>
<div class="ce r" style="left:476px;top:715px;width:72px;height:20px;">A<sub>sr</sub></div>
<div class="ce c" style="left:549px;top:715px;width:72px;height:20px;">6.32</div>
<div class="ce" style="left:622px;top:715px;width:72px;height:20px;">in.<sup>2</sup></div>
<div class="ce r" style="left:38px;top:736px;width:72px;height:20px;">H'</div>
<div class="ce c y" style="left:111px;top:736px;width:72px;height:20px;">2.5</div>
<div class="ce" style="left:184px;top:736px;width:72px;height:20px;">in.</div>
<div class="ce r" style="left:257px;top:736px;width:72px;height:20px;">I<sub>x,sr</sub></div>
<div class="ce c" style="left:330px;top:736px;width:72px;height:20px;">1138.79</div>
<div class="ce" style="left:403px;top:736px;width:72px;height:20px;">in.<sup>4</sup></div>
<div class="ce r" style="left:476px;top:736px;width:72px;height:20px;">I<sub>y,sr</sub></div>
<div class="ce c" style="left:549px;top:736px;width:72px;height:20px;">1138.79</div>
<div class="ce" style="left:622px;top:736px;width:72px;height:20px;">in.<sup>4</sup></div>
<div class="ce r" style="left:38px;top:757px;width:72px;height:20px;">B'</div>
<div class="ce c y" style="left:111px;top:757px;width:72px;height:20px;">2.5</div>
<div class="ce" style="left:184px;top:757px;width:72px;height:20px;">in.</div>
<div class="ce r" style="left:257px;top:757px;width:72px;height:20px;">Z<sub>x,sr</sub></div>
<div class="ce c" style="left:330px;top:757px;width:72px;height:20px;">73.47</div>
<div class="ce" style="left:403px;top:757px;width:72px;height:20px;">in.<sup>3</sup></div>
<div class="ce r" style="left:476px;top:757px;width:72px;height:20px;">Z<sub>y,sr</sub></div>
<div class="ce c" style="left:549px;top:757px;width:72px;height:20px;">73.47</div>
<div class="ce" style="left:622px;top:757px;width:72px;height:20px;">in.<sup>3</sup></div>
<div class="ce c b it" style="left:896px;top:442px;width:349px;height:20px;">Table of Steel Material Specifications</div>
<div class="ce c" style="left:896px;top:463px;width:130px;height:20px;">Specification</div>
<div class="ce c" style="left:1027px;top:463px;width:72px;height:20px;">F<sub>y</sub></div>
<div class="ce c" style="left:896px;top:484px;width:130px;height:20px;">---</div>
<div class="ce c" style="left:1027px;top:484px;width:72px;height:20px;">ksi</div>
<div class="ce c" style="left:896px;top:505px;width:130px;height:20px;">Custom</div>
<div class="ce c y" style="left:1027px;top:505px;width:72px;height:20px;">100</div>
<div class="ce c" style="left:896px;top:526px;width:130px;height:20px;">A709</div>
<div class="ce c" style="left:1027px;top:526px;width:72px;height:20px;">50</div>
<div class="ce c" style="left:896px;top:547px;width:130px;height:20px;">A913 Gr. 50</div>
<div class="ce c" style="left:1027px;top:547px;width:72px;height:20px;">50</div>
<div class="ce c" style="left:896px;top:568px;width:130px;height:20px;">A913 Gr. 60</div>
<div class="ce c" style="left:1027px;top:568px;width:72px;height:20px;">60</div>
<div class="ce c" style="left:896px;top:589px;width:130px;height:20px;">A913 Gr. 65</div>
<div class="ce c" style="left:1027px;top:589px;width:72px;height:20px;">65</div>
<div class="ce c" style="left:896px;top:610px;width:130px;height:20px;">A913 Gr. 70</div>
<div class="ce c" style="left:1027px;top:610px;width:72px;height:20px;">70</div>
<div class="ce c" style="left:896px;top:631px;width:130px;height:20px;">A992</div>
<div class="ce c" style="left:1027px;top:631px;width:72px;height:20px;">50</div>
<div class="ce c b it" style="left:896px;top:673px;width:349px;height:20px;">Table of Reinforcing Material Specifications</div>
<div class="ce c" style="left:896px;top:694px;width:130px;height:20px;">Specification</div>
<div class="ce c" style="left:1027px;top:694px;width:72px;height:20px;">F<sub>y</sub></div>
<div class="ce c" style="left:896px;top:715px;width:130px;height:20px;">---</div>
<div class="ce c" style="left:1027px;top:715px;width:72px;height:20px;">ksi</div>
<div class="ce c" style="left:896px;top:736px;width:130px;height:20px;">Custom</div>
<div class="ce c y" style="left:1027px;top:736px;width:72px;height:20px;">75</div>
<div class="ce c" style="left:896px;top:757px;width:130px;height:20px;">Grade 40</div>
<div class="ce c" style="left:1027px;top:757px;width:72px;height:20px;">40</div>
<div class="ce c b it" style="left:1319px;top:106px;width:534px;height:20px;">Calculation of Section Properties for Reinforcing</div>
<div class="ce" style="left:1319px;top:127px;width:31px;height:20px;"></div>
<div class="ce c" style="left:1351px;top:127px;width:72px;height:20px;">bar #</div>
<div class="ce c" style="left:1424px;top:127px;width:72px;height:20px;">x</div>
<div class="ce c" style="left:1497px;top:127px;width:72px;height:20px;">y</div>
<div class="ce c" style="left:1570px;top:127px;width:72px;height:20px;">I<sub>x</sub></div>
<div class="ce c" style="left:1643px;top:127px;width:72px;height:20px;">I<sub>y</sub></div>
<div class="ce c" style="left:1716px;top:127px;width:68px;height:20px;">Z<sub>x</sub></div>
<div class="ce c" style="left:1785px;top:127px;width:68px;height:20px;">Z<sub>y</sub></div>
<div class="ce c" style="left:1351px;top:148px;width:72px;height:20px;">1</div>
<div class="ce c" style="left:1424px;top:148px;width:72px;height:20px;">-15.500</div>
<div class="ce c" style="left:1497px;top:148px;width:72px;height:20px;">15.500</div>
<div class="ce c" style="left:1570px;top:148px;width:72px;height:20px;">189.80</div>
<div class="ce c" style="left:1643px;top:148px;width:72px;height:20px;">189.80</div>
<div class="ce c" style="left:1716px;top:148px;width:68px;height:20px;">12.25</div>
<div class="ce c" style="left:1785px;top:148px;width:68px;height:20px;">12.25</div>
<div class="ce c" style="left:1351px;top:169px;width:72px;height:20px;">2</div>
<div class="ce c" style="left:1424px;top:169px;width:72px;height:20px;">0.000</div>
<div class="ce c" style="left:1497px;top:169px;width:72px;height:20px;">15.500</div>
<div class="ce c" style="left:1570px;top:169px;width:72px;height:20px;">189.80</div>
<div class="ce c" style="left:1643px;top:169px;width:72px;height:20px;">0.00</div>
<div class="ce c" style="left:1716px;top:169px;width:68px;height:20px;">12.25</div>
<div class="ce c" style="left:1785px;top:169px;width:68px;height:20px;">0.00</div>
<div class="ce c" style="left:1351px;top:190px;width:72px;height:20px;">3</div>
<div class="ce c" style="left:1424px;top:190px;width:72px;height:20px;">15.500</div>
<div class="ce c" style="left:1497px;top:190px;width:72px;height:20px;">15.500</div>
<div class="ce c" style="left:1570px;top:190px;width:72px;height:20px;">189.80</div>
<div class="ce c" style="left:1643px;top:190px;width:72px;height:20px;">189.80</div>
<div class="ce c" style="left:1716px;top:190px;width:68px;height:20px;">12.25</div>
<div class="ce c" style="left:1785px;top:190px;width:68px;height:20px;">12.25</div>
<div class="ce c" style="left:1351px;top:211px;width:72px;height:20px;">4</div>
<div class="ce c" style="left:1351px;top:232px;width:72px;height:20px;">5</div>
<div class="ce c" style="left:1351px;top:253px;width:72px;height:20px;">6</div>
<div class="ce c" style="left:1351px;top:274px;width:72px;height:20px;">7</div>
<div class="ce c" style="left:1351px;top:295px;width:72px;height:20px;">8</div>
<div class="ce c" style="left:1351px;top:316px;width:72px;height:20px;">9</div>
<div class="ce c" style="left:1351px;top:337px;width:72px;height:20px;">10</div>
<div class="ce c" style="left:1351px;top:358px;width:72px;height:20px;">1</div>
<div class="ce c" style="left:1424px;top:358px;width:72px;height:20px;">-15.500</div>
<div class="ce c" style="left:1497px;top:358px;width:72px;height:20px;">-15.500</div>
<div class="ce c" style="left:1570px;top:358px;width:72px;height:20px;">189.80</div>
<div class="ce c" style="left:1643px;top:358px;width:72px;height:20px;">189.80</div>
<div class="ce c" style="left:1716px;top:358px;width:68px;height:20px;">12.25</div>
<div class="ce c" style="left:1785px;top:358px;width:68px;height:20px;">12.25</div>
<div class="ce c" style="left:1351px;top:379px;width:72px;height:20px;">2</div>
<div class="ce c" style="left:1424px;top:379px;width:72px;height:20px;">0.000</div>
<div class="ce c" style="left:1497px;top:379px;width:72px;height:20px;">-15.500</div>
<div class="ce c" style="left:1570px;top:379px;width:72px;height:20px;">189.80</div>
<div class="ce c" style="left:1643px;top:379px;width:72px;height:20px;">0.00</div>
<div class="ce c" style="left:1716px;top:379px;width:68px;height:20px;">12.25</div>
<div class="ce c" style="left:1785px;top:379px;width:68px;height:20px;">0.00</div>
<div class="ce c" style="left:1351px;top:400px;width:72px;height:20px;">3</div>
<div class="ce c" style="left:1424px;top:400px;width:72px;height:20px;">15.500</div>
<div class="ce c" style="left:1497px;top:400px;width:72px;height:20px;">-15.500</div>
<div class="ce c" style="left:1570px;top:400px;width:72px;height:20px;">189.80</div>
<div class="ce c" style="left:1643px;top:400px;width:72px;height:20px;">189.80</div>
<div class="ce c" style="left:1716px;top:400px;width:68px;height:20px;">12.25</div>
<div class="ce c" style="left:1785px;top:400px;width:68px;height:20px;">12.25</div>
<div class="ce c" style="left:1351px;top:421px;width:72px;height:20px;">4</div>
<div class="ce c" style="left:1351px;top:442px;width:72px;height:20px;">5</div>
<div class="ce c" style="left:1351px;top:463px;width:72px;height:20px;">6</div>
<div class="ce c" style="left:1351px;top:484px;width:72px;height:20px;">7</div>
<div class="ce c" style="left:1351px;top:505px;width:72px;height:20px;">8</div>
<div class="ce c" style="left:1351px;top:526px;width:72px;height:20px;">9</div>
<div class="ce c" style="left:1351px;top:547px;width:72px;height:20px;">10</div>
<div class="ce c" style="left:1351px;top:568px;width:72px;height:20px;">2</div>
<div class="ce c" style="left:1424px;top:568px;width:72px;height:20px;">-15.500</div>
<div class="ce c" style="left:1497px;top:568px;width:72px;height:20px;">0.000</div>
<div class="ce c" style="left:1570px;top:568px;width:72px;height:20px;">0.00</div>
<div class="ce c" style="left:1643px;top:568px;width:72px;height:20px;">189.80</div>
<div class="ce c" style="left:1716px;top:568px;width:68px;height:20px;">0.00</div>
<div class="ce c" style="left:1785px;top:568px;width:68px;height:20px;">12.25</div>
<div class="ce c" style="left:1351px;top:589px;width:72px;height:20px;">3</div>
<div class="ce c" style="left:1351px;top:610px;width:72px;height:20px;">4</div>
<div class="ce c" style="left:1351px;top:631px;width:72px;height:20px;">5</div>
<div class="ce c" style="left:1351px;top:652px;width:72px;height:20px;">6</div>
<div class="ce c" style="left:1351px;top:673px;width:72px;height:20px;">7</div>
<div class="ce c" style="left:1351px;top:694px;width:72px;height:20px;">8</div>
<div class="ce c" style="left:1351px;top:715px;width:72px;height:20px;">9</div>
<div class="ce c" style="left:1351px;top:736px;width:72px;height:20px;">2</div>
<div class="ce c" style="left:1424px;top:736px;width:72px;height:20px;">15.500</div>
<div class="ce c" style="left:1497px;top:736px;width:72px;height:20px;">0.000</div>
<div class="ce c" style="left:1570px;top:736px;width:72px;height:20px;">0.00</div>
<div class="ce c" style="left:1643px;top:736px;width:72px;height:20px;">189.80</div>
<div class="ce c" style="left:1716px;top:736px;width:68px;height:20px;">0.00</div>
<div class="ce c" style="left:1785px;top:736px;width:68px;height:20px;">12.25</div>
<div class="ce c" style="left:1351px;top:757px;width:72px;height:20px;">3</div>
<div class="ce" style="left:1319px;top:148px;width:31px;height:209px;padding:0"><div class="t" style="left:-88.2px;top:88px;width:209px;height:31px;line-height:31px;text-align:center;transform:rotate(-90deg);font-size:13.33px;letter-spacing:0.45px;">Top Face</div></div>
<div class="ce" style="left:1319px;top:358px;width:31px;height:209px;padding:0"><div class="t" style="left:-88.2px;top:88px;width:209px;height:31px;line-height:31px;text-align:center;transform:rotate(-90deg);font-size:13.33px;letter-spacing:0.45px;">Bottom Face</div></div>
<div class="ce" style="left:1319px;top:568px;width:31px;height:167px;padding:0"><div class="t" style="left:-67.2px;top:67px;width:167px;height:31px;line-height:31px;text-align:center;transform:rotate(-90deg);font-size:13.33px;letter-spacing:0.45px;">Left Face</div></div>
<div class="ce" style="left:1319px;top:736px;width:31px;height:209px;padding:0"><div class="t" style="left:-88.2px;top:88px;width:209px;height:31px;line-height:31px;text-align:center;transform:rotate(-90deg);font-size:13.33px;letter-spacing:0.45px;">Right Face</div></div>
<div style="left:1318px;top:147px;width:536px;height:1px;background:#757575"></div>
<div style="left:1318px;top:357px;width:536px;height:1px;background:#757575"></div>
<div style="left:1318px;top:567px;width:536px;height:1px;background:#757575"></div>
<div style="left:1318px;top:735px;width:536px;height:1px;background:#757575"></div>
<div style="left:1318.4px;top:147px;width:1.28px;height:800px;background:#757575"></div>
<div style="left:1853.44px;top:147px;width:1.28px;height:800px;background:#757575"></div>
<div style="left:820.86px;top:19px;width:407.94px;height:418.8px;background:#fff"></div>
<svg style="left:820.86px;top:19px" width="407.94" height="418.8" viewBox="641.3 182.81 318.7 327.19"><defs><pattern id="hatch" patternUnits="userSpaceOnUse" width="6.4" height="6.4" patternTransform="rotate(-45 0 0)"><rect width="6.4" height="6.4" fill="#fff"/><path d="M0 3.2 H6.4" stroke="#4a4a4a" stroke-width="0.55"/></pattern><linearGradient id="cg" x1="0" y1="0" x2="1" y2="1"><stop offset="0" stop-color="#eaeaea"/><stop offset="1" stop-color="#e2e2e2"/></linearGradient></defs><rect x="695.2" y="211.8" width="231.9" height="216.9" fill="url(#cg)" stroke="#3c3c3c" stroke-width="0.9"/><path d="M753.3 265.8 H868.8 V279.3 H818 a3.2 3.2 0 0 0 -3.2 3.2 V358.1 a3.2 3.2 0 0 0 3.2 3.2 H868.8 V374.6 H753.3 V361.3 H804.6 a3.2 3.2 0 0 0 3.2 -3.2 V282.5 a3.2 3.2 0 0 0 -3.2 -3.2 H753.3 Z" fill="url(#hatch)" stroke="#333" stroke-width="0.8"/><g fill="none" stroke="#8a8a8a" stroke-width="0.5"><path d="M712.6 240 a11.8 11.8 0 0 1 23.6 0"/><path d="M724.4 390.2 A11.2 11.2 0 1 0 735.6 401.4"/><path d="M897.7 390.2 a11.2 11.2 0 0 1 0 22.4"/></g><g fill="none" stroke="#2e2e2e" stroke-width="0.8" stroke-dasharray="8 3.2"><path d="M712.6 240 V398.4"/><path d="M736.2 240 V390.2 H897.7"/><path d="M724.4 412.6 H897.7"/></g><circle cx="724.2" cy="238.8" r="3" fill="#151515"/><circle cx="810.8" cy="238.8" r="3" fill="#151515"/><circle cx="897.3" cy="238.8" r="3" fill="#151515"/><circle cx="724.2" cy="320.2" r="3" fill="#151515"/><circle cx="897.3" cy="320.2" r="3" fill="#151515"/><circle cx="724.2" cy="401.4" r="3" fill="#151515"/><circle cx="810.8" cy="401.4" r="3" fill="#151515"/><circle cx="897.5" cy="401.4" r="3" fill="#151515"/><path d="M811.4 320.2 H836 M811.4 320.2 V299" stroke="#2a2a2a" stroke-width="0.8" fill="none"/><path d="M843.4 320.2 L833.9 321.8 L833.9 318.6 Z" fill="#111"/><path d="M811.4 290.6 L813 300.1 L809.8 300.1 Z" fill="#111"/><path d="M663.8 211.8 H687 M664 428.7 H687 M672.8 213 V307 M672.8 332.5 V427.5" stroke="#2a2a2a" stroke-width="0.75" fill="none"/><path d="M672.8 212 L674.8 223.5 L670.8 223.5 Z" fill="#111"/><path d="M672.8 428.5 L670.8 417 L674.8 417 Z" fill="#111"/><path d="M695.3 436.7 V482.2 M927.1 436.7 V482.2 M696 474 H797 M822.5 474 H926" stroke="#2a2a2a" stroke-width="0.75" fill="none"/><path d="M695.5 474 L707.5 472 L707.5 476 Z" fill="#111"/><path d="M926.9 474 L914.9 476 L914.9 472 Z" fill="#111"/><path d="M876.3 213 V238 M870 238.8 H891.2" stroke="#2a2a2a" stroke-width="0.75" fill="none"/><path d="M876.3 212 L878 220.5 L874.6 220.5 Z" fill="#111"/><path d="M876.3 238.6 L874.6 230.1 L878 230.1 Z" fill="#111"/><path d="M897.6 289.6 V313.5 M898 295.2 H926.6" stroke="#2a2a2a" stroke-width="0.75" fill="none"/><path d="M897.8 295.2 L906.3 293.5 L906.3 296.9 Z" fill="#111"/><path d="M926.9 295.2 L918.4 296.9 L918.4 293.5 Z" fill="#111"/><path d="M757.2 193.9 H743.3 L727 223.5" stroke="#9a9a9a" stroke-width="0.5" fill="none"/><path d="M724.4 228.3 L727.55 218.62 L730.88 220.45 Z" fill="#111"/><path d="M862.6 439.8 H877 L894.5 416.2" stroke="#9a9a9a" stroke-width="0.5" fill="none"/><path d="M897.2 412.6 L892.76 421.76 L889.71 419.5 Z" fill="#111"/><text x="666.6" y="326" font-size="16" font-family="Liberation Sans,sans-serif" font-style="italic" fill="#111">H</text><text x="805.4" y="480" font-size="16" font-family="Liberation Sans,sans-serif" font-style="italic" fill="#111">B</text><text x="853" y="231.2" font-size="16" font-family="Liberation Sans,sans-serif" font-style="italic" fill="#111">H'</text><text x="904" y="290.2" font-size="16" font-family="Liberation Sans,sans-serif" font-style="italic" fill="#111">B'</text><text x="847.4" y="326" font-size="17" font-family="Liberation Sans,sans-serif" font-style="italic" fill="#111">x</text><text x="806.8" y="283.8" font-size="17" font-family="Liberation Sans,sans-serif" font-style="italic" fill="#111">y</text><text x="763.8" y="200.9" font-size="17" font-family="Liberation Sans,sans-serif" font-style="italic" fill="#111">n</text><text x="773.4" y="205.8" font-size="11.6" textLength="35" lengthAdjust="spacingAndGlyphs" font-family="Liberation Sans,sans-serif" font-style="italic" fill="#111">bars,y</text><text x="812.2" y="446.5" font-size="17" font-family="Liberation Sans,sans-serif" font-style="italic" fill="#111">n</text><text x="822" y="451.7" font-size="11.6" textLength="35" lengthAdjust="spacingAndGlyphs" font-family="Liberation Sans,sans-serif" font-style="italic" fill="#111">bars,x</text><text x="672" y="501.3" font-size="12.1" textLength="277.3" lengthAdjust="spacing" font-family="Liberation Sans,sans-serif" fill="#111">Note: transverse reinforcement not shown for clarity</text></svg>
<div style="left:0;top:0;width:1901px;height:19px;background:#f0f0f0;border-bottom:1px solid #c6c6c6"></div>
<div style="left:0;top:19px;width:26px;height:760px;background:#f0f0f0;border-right:1px solid #d4d4d4"></div>
<div style="left:26px;top:0;width:12px;height:18px;background:#dedede"></div>
<div style="left:0;top:19px;width:25px;height:24px;background:#dedede"></div>
<div class="ch" style="left:22px;width:20px;color:#107c41;font-weight:bold;font-size:13px">A</div>
<div style="left:37px;top:2px;width:1px;height:17px;background:#dcdcdc"></div>
<div class="ch" style="left:38px;width:73px;">B</div>
<div style="left:110px;top:2px;width:1px;height:17px;background:#dcdcdc"></div>
<div class="ch" style="left:111px;width:73px;">C</div>
<div style="left:183px;top:2px;width:1px;height:17px;background:#dcdcdc"></div>
<div class="ch" style="left:184px;width:73px;">D</div>
<div style="left:256px;top:2px;width:1px;height:17px;background:#dcdcdc"></div>
<div class="ch" style="left:257px;width:73px;">E</div>
<div style="left:329px;top:2px;width:1px;height:17px;background:#dcdcdc"></div>
<div class="ch" style="left:330px;width:73px;">F</div>
<div style="left:402px;top:2px;width:1px;height:17px;background:#dcdcdc"></div>
<div class="ch" style="left:403px;width:73px;">G</div>
<div style="left:475px;top:2px;width:1px;height:17px;background:#dcdcdc"></div>
<div class="ch" style="left:476px;width:73px;">H</div>
<div style="left:548px;top:2px;width:1px;height:17px;background:#dcdcdc"></div>
<div class="ch" style="left:549px;width:73px;">I</div>
<div style="left:621px;top:2px;width:1px;height:17px;background:#dcdcdc"></div>
<div class="ch" style="left:622px;width:73px;">J</div>
<div style="left:694px;top:2px;width:1px;height:17px;background:#dcdcdc"></div>
<div class="ch" style="left:695px;width:73px;">K</div>
<div style="left:767px;top:2px;width:1px;height:17px;background:#dcdcdc"></div>
<div class="ch" style="left:768px;width:32px;">L</div>
<div style="left:799px;top:2px;width:1px;height:17px;background:#dcdcdc"></div>
<div class="ch" style="left:800px;width:32px;">M</div>
<div style="left:831px;top:2px;width:1px;height:17px;background:#dcdcdc"></div>
<div class="ch" style="left:832px;width:32px;">N</div>
<div style="left:863px;top:2px;width:1px;height:17px;background:#dcdcdc"></div>
<div class="ch" style="left:864px;width:32px;">O</div>
<div style="left:895px;top:2px;width:1px;height:17px;background:#dcdcdc"></div>
<div class="ch" style="left:896px;width:131px;">P</div>
<div style="left:1026px;top:2px;width:1px;height:17px;background:#dcdcdc"></div>
<div class="ch" style="left:1027px;width:73px;">Q</div>
<div style="left:1099px;top:2px;width:1px;height:17px;background:#dcdcdc"></div>
<div class="ch" style="left:1100px;width:73px;">R</div>
<div style="left:1172px;top:2px;width:1px;height:17px;background:#dcdcdc"></div>
<div class="ch" style="left:1173px;width:73px;">S</div>
<div style="left:1245px;top:2px;width:1px;height:17px;background:#dcdcdc"></div>
<div class="ch" style="left:1246px;width:73px;">T</div>
<div style="left:1318px;top:2px;width:1px;height:17px;background:#dcdcdc"></div>
<div class="ch" style="left:1319px;width:32px;">U</div>
<div style="left:1350px;top:2px;width:1px;height:17px;background:#dcdcdc"></div>
<div class="ch" style="left:1351px;width:73px;">V</div>
<div style="left:1423px;top:2px;width:1px;height:17px;background:#dcdcdc"></div>
<div class="ch" style="left:1424px;width:73px;">W</div>
<div style="left:1496px;top:2px;width:1px;height:17px;background:#dcdcdc"></div>
<div class="ch" style="left:1497px;width:73px;">X</div>
<div style="left:1569px;top:2px;width:1px;height:17px;background:#dcdcdc"></div>
<div class="ch" style="left:1570px;width:73px;">Y</div>
<div style="left:1642px;top:2px;width:1px;height:17px;background:#dcdcdc"></div>
<div class="ch" style="left:1643px;width:73px;">Z</div>
<div style="left:1715px;top:2px;width:1px;height:17px;background:#dcdcdc"></div>
<div class="ch" style="left:1716px;width:69px;">AA</div>
<div style="left:1784px;top:2px;width:1px;height:17px;background:#dcdcdc"></div>
<div class="ch" style="left:1785px;width:69px;">AB</div>
<div style="left:1853px;top:2px;width:1px;height:17px;background:#dcdcdc"></div>
<div class="ch" style="left:1854px;width:70px;">AC</div>
<div style="left:25px;top:2px;width:1px;height:17px;background:#dcdcdc"></div>
<div class="rh" style="top:19px;height:24px;line-height:31px;color:#107c41;font-weight:bold;">1</div>
<div class="rh" style="top:43px;height:21px;line-height:24px;">2</div>
<div class="rh" style="top:64px;height:21px;line-height:24px;">3</div>
<div class="rh" style="top:85px;height:21px;line-height:24px;">4</div>
<div class="rh" style="top:106px;height:21px;line-height:24px;">5</div>
<div class="rh" style="top:127px;height:21px;line-height:24px;">6</div>
<div class="rh" style="top:148px;height:21px;line-height:24px;">7</div>
<div class="rh" style="top:169px;height:21px;line-height:24px;">8</div>
<div class="rh" style="top:190px;height:21px;line-height:24px;">9</div>
<div class="rh" style="top:211px;height:21px;line-height:24px;">10</div>
<div class="rh" style="top:232px;height:21px;line-height:24px;">11</div>
<div class="rh" style="top:253px;height:21px;line-height:24px;">12</div>
<div class="rh" style="top:274px;height:21px;line-height:24px;">13</div>
<div class="rh" style="top:295px;height:21px;line-height:24px;">14</div>
<div class="rh" style="top:316px;height:21px;line-height:24px;">15</div>
<div class="rh" style="top:337px;height:21px;line-height:24px;">16</div>
<div class="rh" style="top:358px;height:21px;line-height:24px;">17</div>
<div class="rh" style="top:379px;height:21px;line-height:24px;">18</div>
<div class="rh" style="top:400px;height:21px;line-height:24px;">19</div>
<div class="rh" style="top:421px;height:21px;line-height:24px;">20</div>
<div class="rh" style="top:442px;height:21px;line-height:24px;">21</div>
<div class="rh" style="top:463px;height:21px;line-height:24px;">22</div>
<div class="rh" style="top:484px;height:21px;line-height:24px;">23</div>
<div class="rh" style="top:505px;height:21px;line-height:24px;">24</div>
<div class="rh" style="top:526px;height:21px;line-height:24px;">25</div>
<div class="rh" style="top:547px;height:21px;line-height:24px;">26</div>
<div class="rh" style="top:568px;height:21px;line-height:24px;">27</div>
<div class="rh" style="top:589px;height:21px;line-height:24px;">28</div>
<div class="rh" style="top:610px;height:21px;line-height:24px;">29</div>
<div class="rh" style="top:631px;height:21px;line-height:24px;">30</div>
<div class="rh" style="top:652px;height:21px;line-height:24px;">31</div>
<div class="rh" style="top:673px;height:21px;line-height:24px;">32</div>
<div class="rh" style="top:694px;height:21px;line-height:24px;">33</div>
<div class="rh" style="top:715px;height:21px;line-height:24px;">34</div>
<div class="rh" style="top:736px;height:21px;line-height:24px;">35</div>
<div class="rh" style="top:757px;height:21px;line-height:24px;">36</div>
<svg style="left:11px;top:3px" width="13.6" height="13.6" viewBox="0 0 14 14"><path d="M13.6 0 V13.6 H0 Z" fill="#dcdcdc"/></svg>
<div style="left:25px;top:18px;width:14px;height:26px;border:2px solid #107c41;"></div>
<div style="left:34.5px;top:39.5px;width:5.5px;height:5.5px;background:#107c41;border:1px solid #fff;border-right:none;border-bottom:none"></div>
</div>
<div style="left:1901.06px;top:215.04px;width:18.94px;height:762.88px;background:#f0f0f0;"></div>
<svg style="left:1904.64px;top:219.14px;" width="11.52" height="8.7" viewBox="0 0 8 6"><path d="M4 0.8 L7.4 5.2 H0.6 Z" fill="#6e6e6e" stroke="#6e6e6e" stroke-width="0.6" stroke-linejoin="round"/></svg>
<div style="left:1906.69px;top:232.06px;width:7.94px;height:87.94px;background:#6a6a6a;border-radius:4px;"></div>
<svg style="left:1904.64px;top:965.89px;" width="11.52" height="8.7" viewBox="0 0 8 6"><path d="M4 5.2 L7.4 0.8 H0.6 Z" fill="#6e6e6e" stroke="#6e6e6e" stroke-width="0.6" stroke-linejoin="round"/></svg>
<div style="left:0px;top:977.92px;width:1920px;height:32px;background:#f0f0f0;"></div>
<svg style="left:19.97px;top:987.9px;" width="7.68" height="11.52" viewBox="0 0 6 9"><path d="M4.6 1 L1.2 4.5 L4.6 8" fill="none" stroke="#b0b0b0" stroke-width="0.9"/></svg>
<svg style="left:52.74px;top:987.9px;" width="7.68" height="11.52" viewBox="0 0 6 9"><path d="M1.4 1 L4.8 4.5 L1.4 8" fill="none" stroke="#b0b0b0" stroke-width="0.9"/></svg>
<div class="t " style="transform:scaleX(1.1120);transform-origin:0 0;left:117.76px;top:988.35px;font-size:13px;color:#444;">Information</div>
<div class="t " style="transform:scaleX(1.0347);transform-origin:0 0;left:218.88px;top:988.35px;font-size:13px;color:#444;">Filled (Round)</div>
<div class="t " style="transform:scaleX(1.0437);transform-origin:0 0;left:332.8px;top:988.35px;font-size:13px;color:#444;">Filled (Rectangular)</div>
<div class="t " style="transform:scaleX(1.0279);transform-origin:0 0;left:481.28px;top:988.35px;font-size:13px;color:#444;">Filled (Rectangular HS)</div>
<div style="left:203.53px;top:984.96px;width:1px;height:17.28px;background:#d0d0d0;"></div>
<div style="left:317.71px;top:984.96px;width:1px;height:17.28px;background:#d0d0d0;"></div>
<div style="left:465.42px;top:984.96px;width:1px;height:17.28px;background:#d0d0d0;"></div>
<div style="left:635.28px;top:984.96px;width:1px;height:17.28px;background:#d0d0d0;"></div>
<div style="left:711.18px;top:984.96px;width:1px;height:17.28px;background:#d0d0d0;"></div>
<div style="left:640.64px;top:977.92px;width:67.2px;height:27.65px;background:#fff;border-radius:0 0 5px 5px;box-shadow:0 1px 1.5px rgba(0,0,0,0.14);"></div>
<div class="t " style="transform:scaleX(0.9407);transform-origin:0 0;left:648.96px;top:984.77px;font-size:13px;color:#1f1f1f;font-weight:bold;">Encased</div>
<div style="left:648.96px;top:1000.96px;width:50.43px;height:2.05px;background:#107c41;border-radius:1px;"></div>
<svg style="left:752.64px;top:986.88px;" width="12.8" height="12.8" viewBox="0 0 10 10"><path d="M5 0.8 V9.2 M0.8 5 H9.2" stroke="#555" stroke-width="0.9"/></svg>
<svg style="left:1422.85px;top:985.6px;" width="5.12" height="15.36" viewBox="0 0 4 12"><circle cx="2" cy="2.6" r="0.75" fill="#555"/><circle cx="2" cy="6" r="0.75" fill="#555"/><circle cx="2" cy="9.4" r="0.75" fill="#555"/></svg>
<div style="left:1441.28px;top:983.68px;width:460.8px;height:19.2px;background:#f5f5f5;border-radius:8px;"></div>
<svg style="left:1445.89px;top:988.93px;" width="7.68" height="8.96" viewBox="0 0 6 7"><path d="M0.8 3.5 L5.2 0.6 V6.4 Z" fill="#6e6e6e" stroke="#6e6e6e" stroke-width="0.5" stroke-linejoin="round"/></svg>
<svg style="left:1890.05px;top:988.93px;" width="7.68" height="8.96" viewBox="0 0 6 7"><path d="M5.2 3.5 L0.8 0.6 V6.4 Z" fill="#6e6e6e" stroke="#6e6e6e" stroke-width="0.5" stroke-linejoin="round"/></svg>
<div style="left:1458.69px;top:989.7px;width:333.06px;height:7.68px;background:#6a6a6a;border-radius:4px;"></div>
<div style="left:0px;top:1009.92px;width:1920px;height:21.76px;background:#f0f0f0;"></div>
<div class="t " style="transform:scaleX(0.9093);transform-origin:0 0;left:10.24px;top:1016.22px;font-size:11.2px;color:#444;">Ready</div>
<svg style="left:58.24px;top:1013.76px;" width="14.72" height="15.36" viewBox="0 0 11.5 12"><circle cx="5" cy="1.9" r="1.3" fill="none" stroke="#444" stroke-width="0.8"/><path d="M0.8 4.4 C3.4 5.4 6.6 5.4 9.2 4.4 M3.6 5.2 V8 L2 11.4 M6.4 5.2 V8 L7 9" fill="none" stroke="#444" stroke-width="0.85" stroke-linecap="round"/><path d="M7.4 8.6 L10.8 11.6 M10.8 8.6 L7.4 11.6" stroke="#444" stroke-width="0.85"/></svg>
<div class="t " style="transform:scaleX(0.8942);transform-origin:0 0;left:76.8px;top:1016.22px;font-size:11.2px;color:#333;font-weight:bold;">Accessibility: Investigate</div>
<div style="left:1621.76px;top:1010.69px;width:40.19px;height:20.99px;background:#dcdcdc;"></div>
<svg style="left:1634.56px;top:1014.53px;" width="14.08" height="13.44" viewBox="0 0 11 10.5"><rect x="0.6" y="0.6" width="9.8" height="9.3" fill="none" stroke="#333" stroke-width="0.9"/><path d="M0.6 3.7 H10.4 M0.6 6.8 H10.4 M3.9 0.6 V9.9 M7.2 0.6 V9.9" stroke="#333" stroke-width="0.8"/></svg>
<svg style="left:1674.24px;top:1014.53px;" width="14.72" height="13.44" viewBox="0 0 11.5 10.5"><rect x="0.6" y="0.6" width="10.3" height="9.3" rx="1" fill="none" stroke="#444" stroke-width="0.9"/><rect x="3.4" y="2.6" width="4.6" height="5.4" fill="none" stroke="#444" stroke-width="0.8"/><path d="M4.6 4.4 H6.8 M4.6 6.2 H6.8" stroke="#444" stroke-width="0.5"/></svg>
<svg style="left:1714.43px;top:1014.27px;" width="14.72" height="13.44" viewBox="0 0 11.5 10.5"><path d="M0.6 0.6 H10.9 V9.9 H0.6 Z" fill="none" stroke="#444" stroke-width="0.9"/><path d="M3.4 0.6 V5.6 H8 V0.6" fill="none" stroke="#444" stroke-width="0.9"/></svg>
<svg style="left:1747.2px;top:1017.6px;" width="8.96" height="7.68" viewBox="0 0 7 6"><path d="M1 3 H6" stroke="#777" stroke-width="0.8"/></svg>
<div style="left:1761.28px;top:1020.67px;width:99.07px;height:1.02px;background:#8a8a8a;"></div>
<div style="left:1808.64px;top:1015.55px;width:4.35px;height:11.26px;background:#444;border-radius:1px;"></div>
<svg style="left:1864.32px;top:1016.96px;" width="8.96" height="8.96" viewBox="0 0 7 7"><path d="M0.8 3.5 H6.2 M3.5 0.8 V6.2" stroke="#777" stroke-width="0.8"/></svg>
<div class="t " style="transform:scaleX(0.8713);transform-origin:0 0;left:1886.72px;top:1016.22px;font-size:11.2px;color:#444;">100%</div>
</div></body></html>
